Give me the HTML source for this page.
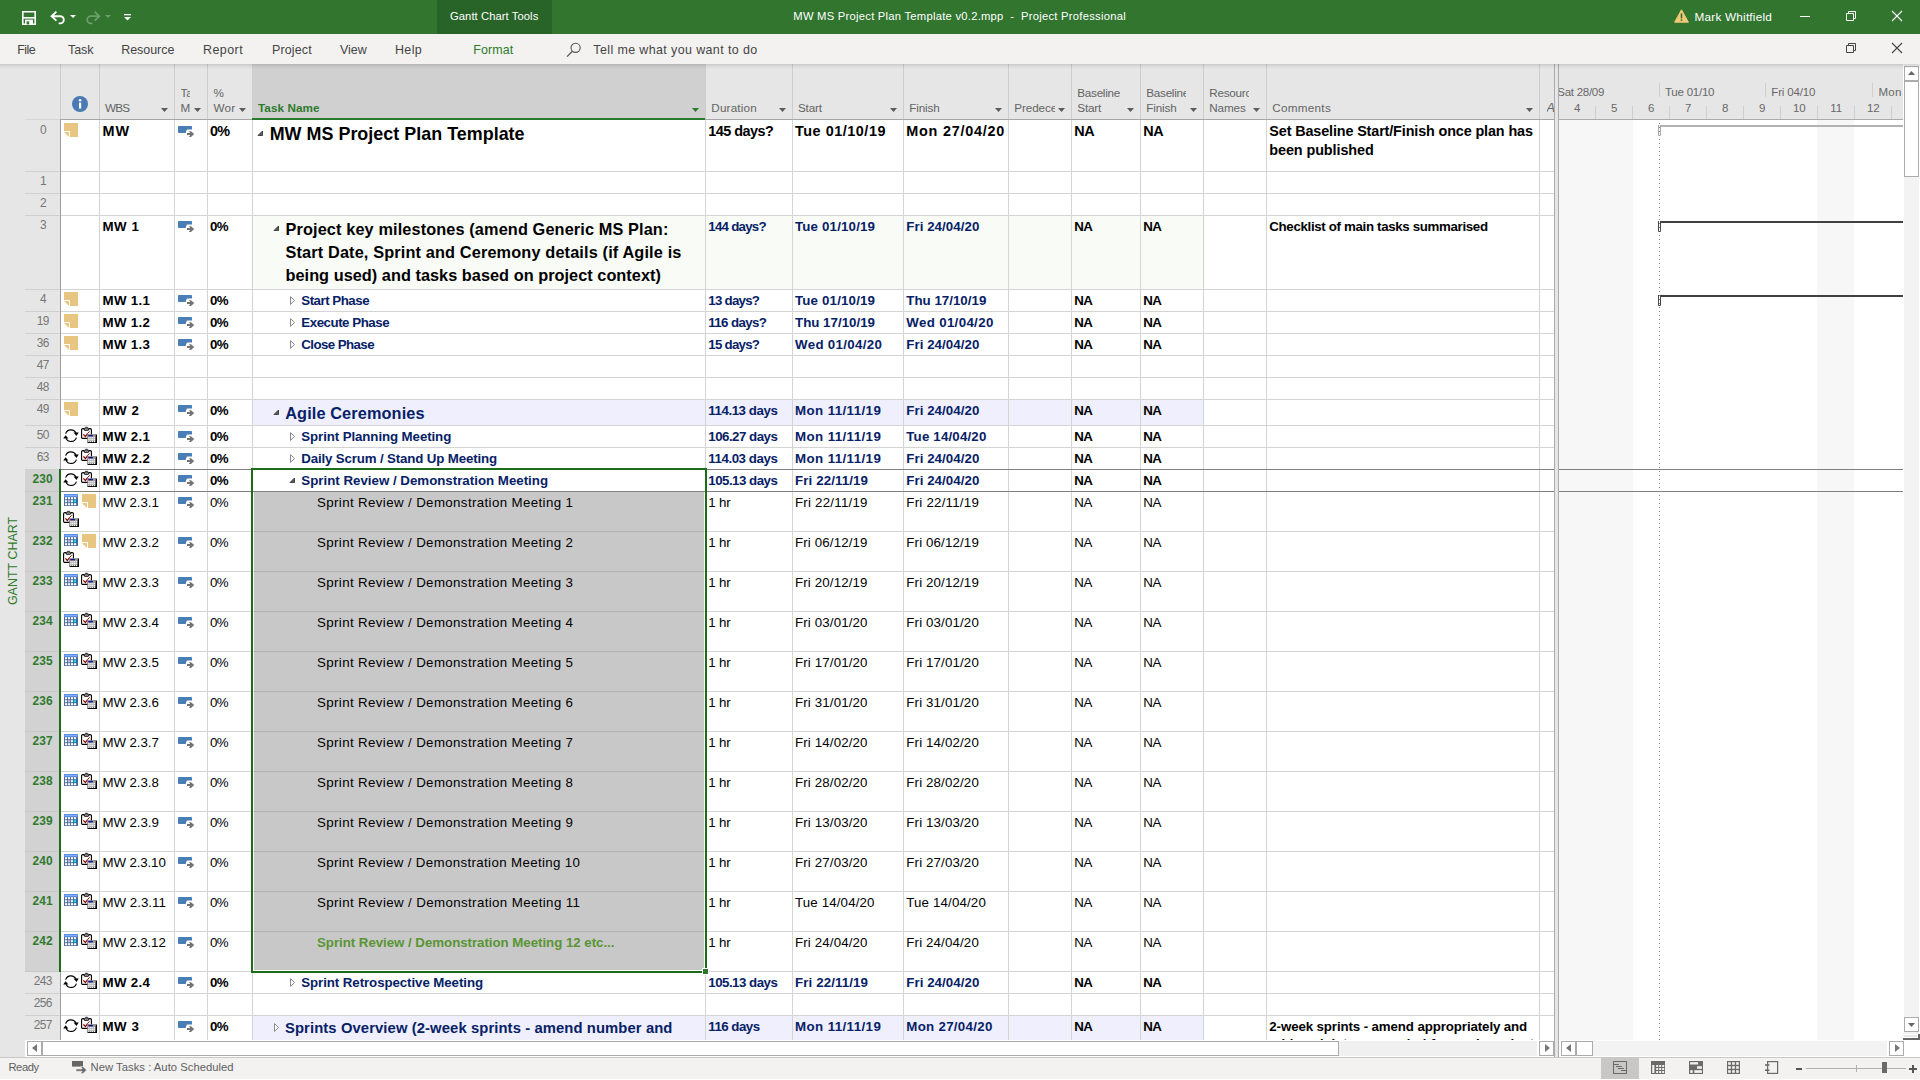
<!DOCTYPE html>
<html lang="en"><head><meta charset="utf-8"><title>MW MS Project Plan Template v0.2.mpp - Project Professional</title><style>
html,body{margin:0;padding:0;}
body{width:1920px;height:1080px;overflow:hidden;position:relative;background:#fff;font-family:"Liberation Sans",sans-serif;}
#app{position:absolute;left:0;top:0;width:1920px;height:1080px;overflow:hidden;}
#app div,#app span.t,#app svg{position:absolute;}
span.t{white-space:pre;display:block;}
svg{overflow:visible;}
</style></head><body><div id="app">
<div style="left:0px;top:0px;width:1920px;height:34px;background:#31752f;"></div>
<div style="left:437px;top:0px;width:115px;height:34px;background:#286328;"></div>
<svg style="left:22px;top:11px" width="14" height="14" viewBox="0 0 14 14"><path d="M.8 .8H13.2V13.2H.8Z" fill="none" stroke="#fff" stroke-width="1.6"/><rect x="1" y="6" width="12" height="1.6" fill="#fff"/><rect x="3" y="8.6" width="8" height="5" fill="#fff"/><rect x="4.6" y="10.4" width="2.6" height="3" fill="#31752f"/></svg>
<svg style="left:50px;top:10px" width="16" height="15" viewBox="0 0 16 15"><path d="M6.4 1.6L1.6 6.2L6.4 10.6" fill="none" stroke="#fff" stroke-width="1.9"/><path d="M2 6.2H10.2A3.6 3.6 0 0 1 10.2 13.4H8.6" fill="none" stroke="#fff" stroke-width="1.9"/></svg>
<svg style="left:70px;top:15px" width="6" height="3" viewBox="0 0 6 3"><path d="M0 0H6L3 3Z" fill="#fff"/></svg>
<svg style="left:85px;top:10px" width="16" height="15" viewBox="0 0 16 15"><path d="M9.6 1.6L14.4 6.2L9.6 10.6" fill="none" stroke="#6f9f6d" stroke-width="1.7"/><path d="M14 6.2H5.8A3.6 3.6 0 0 0 5.8 13.4H7.4" fill="none" stroke="#6f9f6d" stroke-width="1.7"/></svg>
<svg style="left:105px;top:15px" width="6" height="3" viewBox="0 0 6 3"><path d="M0 0H6L3 3Z" fill="#6f9f6d"/></svg>
<svg style="left:124px;top:13.5px" width="7" height="7" viewBox="0 0 7 7"><rect x="0" y="0" width="7" height="1.3" fill="#fff"/><path d="M0 3H7L3.5 6.5Z" fill="#fff"/></svg>
<span class="t" style="left:450.00px;top:4px;font-size:11.22px;color:#fff;line-height:24px;letter-spacing:0.075px;">Gantt Chart Tools</span>
<span class="t" style="left:793.30px;top:4px;font-size:11.22px;color:#fff;line-height:24px;letter-spacing:0.253px;">MW MS Project Plan Template v0.2.mpp  -  Project Professional</span>
<svg style="left:1674px;top:9px" width="15" height="14" viewBox="0 0 15 14"><path d="M7.5 .8L14.4 13.2H.6Z" fill="#f2c879" stroke="#f2c879" stroke-width="1" stroke-linejoin="round"/><rect x="6.7" y="4.4" width="1.6" height="5" fill="#31752f"/><rect x="6.7" y="10.3" width="1.6" height="1.6" fill="#31752f"/></svg>
<span class="t" style="left:1694.50px;top:5px;font-size:11.781px;color:#fff;line-height:24px;letter-spacing:0.213px;">Mark Whitfield</span>
<div style="left:1800px;top:16px;width:10px;height:1px;background:#fff;"></div>
<svg style="left:1846px;top:11px" width="10" height="10" viewBox="0 0 10 10"><path d="M.5 2.5H7.5V9.5H.5Z" fill="none" stroke="#fff" stroke-width="1"/><path d="M2.5 2.5V.5H9.5V7.5H7.5" fill="none" stroke="#fff" stroke-width="1"/></svg>
<svg style="left:1892px;top:11px" width="10" height="10" viewBox="0 0 10 10"><path d="M0 0L10 10M10 0L0 10" stroke="#fff" stroke-width="1.1" fill="none"/></svg>
<div style="left:0px;top:34px;width:1920px;height:30px;background:#f3f2f1;"></div>
<span class="t" style="left:17.30px;top:38px;font-size:12.463550000000001px;color:#444;line-height:24px;letter-spacing:-0.595px;">File</span>
<span class="t" style="left:68.00px;top:38px;font-size:12.463550000000001px;color:#444;line-height:24px;letter-spacing:-0.042px;">Task</span>
<span class="t" style="left:121.20px;top:38px;font-size:12.463550000000001px;color:#444;line-height:24px;letter-spacing:-0.020px;">Resource</span>
<span class="t" style="left:203.00px;top:38px;font-size:12.463550000000001px;color:#444;line-height:24px;letter-spacing:0.458px;">Report</span>
<span class="t" style="left:272.00px;top:38px;font-size:12.463550000000001px;color:#444;line-height:24px;letter-spacing:0.151px;">Project</span>
<span class="t" style="left:340.00px;top:38px;font-size:12.463550000000001px;color:#444;line-height:24px;letter-spacing:-0.030px;">View</span>
<span class="t" style="left:395.00px;top:38px;font-size:12.463550000000001px;color:#444;line-height:24px;letter-spacing:0.355px;">Help</span>
<span class="t" style="left:473.30px;top:38px;font-size:12.463550000000001px;color:#2b7a2b;line-height:24px;letter-spacing:0.105px;">Format</span>
<span class="t" style="left:593.30px;top:38px;font-size:12.463550000000001px;color:#444;line-height:24px;letter-spacing:0.392px;">Tell me what you want to do</span>
<svg style="left:566px;top:42px" width="16" height="16" viewBox="0 0 16 16"><circle cx="9.6" cy="5.8" r="4.6" fill="none" stroke="#555" stroke-width="1.1"/><path d="M6.4 9.2L1 14.6" stroke="#555" stroke-width="1.3" fill="none"/></svg>
<svg style="left:1846px;top:43px" width="10" height="10" viewBox="0 0 10 10"><path d="M.5 2.5H7.5V9.5H.5Z" fill="none" stroke="#444" stroke-width="1"/><path d="M2.5 2.5V.5H9.5V7.5H7.5" fill="none" stroke="#444" stroke-width="1"/></svg>
<svg style="left:1892px;top:43px" width="10" height="10" viewBox="0 0 10 10"><path d="M0 0L10 10M10 0L0 10" stroke="#444" stroke-width="1.1" fill="none"/></svg>
<div style="left:0px;top:64px;width:1920px;height:5px;background:linear-gradient(rgba(0,0,0,.13),rgba(0,0,0,.05) 45%,rgba(0,0,0,0));z-index:5;"></div>
<div style="left:0px;top:64px;width:25px;height:993px;background:#e6e6e6;"></div>
<span class="t" style="left:12.5px;top:561px;font-size:12.46px;color:#2f7a2d;line-height:20px;transform:translate(-50%,-50%) rotate(-90deg);letter-spacing:0.011px;">GANTT CHART</span>
<div style="left:0px;top:1057px;width:1920px;height:23px;background:#f3f2f1;"></div>
<div style="left:0px;top:1057px;width:1920px;height:1px;background:#c8c8c8;"></div>
<div style="left:0px;top:1079px;width:1920px;height:1px;background:#fff;"></div>
<span class="t" style="left:8.50px;top:1055px;font-size:11.22px;color:#5e5e5e;line-height:24px;letter-spacing:-0.483px;">Ready</span>
<svg style="left:72px;top:1061px" width="15" height="13" viewBox="0 0 15 13"><rect x="0" y="0" width="11" height="5.6" fill="#666"/><path d="M4 8H10.2L8.6 5.6H11L14.6 9L11 12.6H8.6L10.2 10.2H4Z" fill="#666" stroke="#f3f2f1" stroke-width=".6"/></svg>
<span class="t" style="left:90.60px;top:1055px;font-size:11.22px;color:#5e5e5e;line-height:24px;letter-spacing:0.040px;">New Tasks : Auto Scheduled</span>
<div style="left:1601px;top:1058px;width:38px;height:21px;background:#c8c7c5;"></div>
<svg style="left:1613px;top:1061px" width="14" height="13" viewBox="0 0 14 13"><rect x=".5" y=".5" width="13" height="12" fill="none" stroke="#6a6a6a" stroke-width="1"/><path d="M0 3.5H5.8M3 5.5H8.8M5 7.5H10.8M8 9.5H14" stroke="#6a6a6a" stroke-width="1"/></svg>
<svg style="left:1651px;top:1061px" width="14" height="13" viewBox="0 0 14 13"><rect x="0" y="0" width="14" height="13" fill="#6a6a6a"/><rect x="1.2" y="4" width="2.2" height="8" fill="#f3f2f1"/><rect x="5.2" y="4.0" width="2" height="2" fill="#f3f2f1"/><rect x="5.2" y="7.0" width="2" height="2" fill="#f3f2f1"/><rect x="5.2" y="10.0" width="2" height="2" fill="#f3f2f1"/><rect x="8.2" y="4.0" width="2" height="2" fill="#f3f2f1"/><rect x="8.2" y="7.0" width="2" height="2" fill="#f3f2f1"/><rect x="8.2" y="10.0" width="2" height="2" fill="#f3f2f1"/><rect x="11.2" y="4.0" width="2" height="2" fill="#f3f2f1"/><rect x="11.2" y="7.0" width="2" height="2" fill="#f3f2f1"/><rect x="11.2" y="10.0" width="2" height="2" fill="#f3f2f1"/></svg>
<svg style="left:1689px;top:1061px" width="14" height="13" viewBox="0 0 14 13"><rect x="0" y="0" width="14" height="13" fill="#6a6a6a"/><rect x="1.1" y="1.2" width="8" height="2.3" fill="#f3f2f1"/><rect x="8.1" y="5.2" width="4.8" height="2.6" fill="#f3f2f1"/><rect x="1.2" y="9.2" width="2.5" height="2.7" fill="#f3f2f1"/><rect x="5.3" y="9.2" width="7.6" height="2.7" fill="#f3f2f1"/></svg>
<svg style="left:1727px;top:1061px" width="13" height="13" viewBox="0 0 13 13"><rect x="0" y="0" width="13" height="13" fill="#6a6a6a"/><rect x="1.1" y="1.2" width="2.7" height="2.6" fill="#f3f2f1"/><rect x="1.1" y="5.2" width="2.7" height="2.6" fill="#f3f2f1"/><rect x="1.1" y="9.2" width="2.7" height="2.6" fill="#f3f2f1"/><rect x="5.1" y="1.2" width="2.7" height="2.6" fill="#f3f2f1"/><rect x="5.1" y="5.2" width="2.7" height="2.6" fill="#f3f2f1"/><rect x="5.1" y="9.2" width="2.7" height="2.6" fill="#f3f2f1"/><rect x="9.1" y="1.2" width="2.7" height="2.6" fill="#f3f2f1"/><rect x="9.1" y="5.2" width="2.7" height="2.6" fill="#f3f2f1"/><rect x="9.1" y="9.2" width="2.7" height="2.6" fill="#f3f2f1"/></svg>
<svg style="left:1765px;top:1061px" width="14" height="13" viewBox="0 0 14 13"><rect x="2.6" y=".6" width="10" height="11.8" fill="none" stroke="#6a6a6a" stroke-width="1.2"/><rect x="0" y="3.2" width="4.4" height="1.6" fill="#6a6a6a"/><rect x="0" y="8.4" width="4.4" height="1.6" fill="#6a6a6a"/></svg>
<div style="left:1796px;top:1067.5px;width:6px;height:2px;background:#555;"></div>
<div style="left:1806px;top:1068px;width:100px;height:1px;background:#b0b0b0;"></div>
<div style="left:1856px;top:1065px;width:1px;height:7px;background:#b0b0b0;"></div>
<div style="left:1882px;top:1062px;width:5px;height:11px;background:#6a6a6a;"></div>
<div style="left:1909px;top:1067.5px;width:8px;height:2px;background:#555;"></div>
<div style="left:1912px;top:1064.5px;width:2px;height:8px;background:#555;"></div>
<div style="left:25px;top:64px;width:1534px;height:55px;background:#e6e6e6;"></div>
<div style="left:252px;top:64px;width:453px;height:55px;background:#d0d0d0;"></div>
<div style="left:60px;top:64px;width:1px;height:55px;background:#cdcdcd;"></div>
<div style="left:99px;top:64px;width:1px;height:55px;background:#cdcdcd;"></div>
<div style="left:174px;top:64px;width:1px;height:55px;background:#cdcdcd;"></div>
<div style="left:207px;top:64px;width:1px;height:55px;background:#cdcdcd;"></div>
<div style="left:252px;top:64px;width:1px;height:55px;background:#cdcdcd;"></div>
<div style="left:705px;top:64px;width:1px;height:55px;background:#cdcdcd;"></div>
<div style="left:792px;top:64px;width:1px;height:55px;background:#cdcdcd;"></div>
<div style="left:903px;top:64px;width:1px;height:55px;background:#cdcdcd;"></div>
<div style="left:1008px;top:64px;width:1px;height:55px;background:#cdcdcd;"></div>
<div style="left:1071px;top:64px;width:1px;height:55px;background:#cdcdcd;"></div>
<div style="left:1140px;top:64px;width:1px;height:55px;background:#cdcdcd;"></div>
<div style="left:1203px;top:64px;width:1px;height:55px;background:#cdcdcd;"></div>
<div style="left:1266px;top:64px;width:1px;height:55px;background:#cdcdcd;"></div>
<div style="left:1539px;top:64px;width:1px;height:55px;background:#cdcdcd;"></div>
<div style="left:60px;top:119px;width:1499px;height:1px;background:#a6a6a6;"></div>
<div style="left:252px;top:118px;width:453px;height:2px;background:#2c7a2c;"></div>
<svg style="left:72px;top:96px" width="16" height="16" viewBox="0 0 16 16"><circle cx="8" cy="8" r="8" fill="#4a7ab4"/><rect x="7" y="6.6" width="2.2" height="6" fill="#fff"/><circle cx="8.1" cy="4.2" r="1.3" fill="#fff"/></svg>
<span class="t" style="left:105.00px;top:96px;font-size:11.7px;color:#646464;line-height:24px;letter-spacing:-0.750px;">WBS</span>
<span class="t" style="left:180.50px;top:81px;font-size:11.7px;color:#646464;line-height:24px;width:9.6px;overflow:hidden;">Ta</span>
<span class="t" style="left:180.50px;top:96px;font-size:11.7px;color:#646464;line-height:24px;">M</span>
<span class="t" style="left:213.60px;top:81px;font-size:11.7px;color:#646464;line-height:24px;">%</span>
<span class="t" style="left:213.60px;top:96px;font-size:11.7px;color:#646464;line-height:24px;letter-spacing:0.132px;">Wor</span>
<span class="t" style="left:258.00px;top:96px;font-size:11.7px;color:#2c7a2c;line-height:24px;font-weight:bold;letter-spacing:0.073px;">Task Name</span>
<span class="t" style="left:711.30px;top:96px;font-size:11.7px;color:#646464;line-height:24px;letter-spacing:0.182px;">Duration</span>
<span class="t" style="left:798.00px;top:96px;font-size:11.7px;color:#646464;line-height:24px;letter-spacing:-0.177px;">Start</span>
<span class="t" style="left:909.30px;top:96px;font-size:11.7px;color:#646464;line-height:24px;letter-spacing:-0.142px;">Finish</span>
<span class="t" style="left:1014.30px;top:96px;font-size:11.7px;color:#646464;line-height:24px;letter-spacing:-0.097px;width:40.5px;overflow:hidden;">Predece</span>
<span class="t" style="left:1077.30px;top:81px;font-size:11.7px;color:#646464;line-height:24px;letter-spacing:-0.269px;">Baseline</span>
<span class="t" style="left:1077.30px;top:96px;font-size:11.7px;color:#646464;line-height:24px;letter-spacing:-0.177px;">Start</span>
<span class="t" style="left:1146.30px;top:81px;font-size:11.7px;color:#646464;line-height:24px;letter-spacing:-0.269px;width:40px;overflow:hidden;">Baseline</span>
<span class="t" style="left:1146.30px;top:96px;font-size:11.7px;color:#646464;line-height:24px;letter-spacing:-0.142px;">Finish</span>
<span class="t" style="left:1209.30px;top:81px;font-size:11.7px;color:#646464;line-height:24px;letter-spacing:-0.261px;width:40px;overflow:hidden;">Resourc</span>
<span class="t" style="left:1209.30px;top:96px;font-size:11.7px;color:#646464;line-height:24px;letter-spacing:-0.140px;">Names</span>
<span class="t" style="left:1272.30px;top:96px;font-size:11.7px;color:#646464;line-height:24px;letter-spacing:0.276px;">Comments</span>
<span class="t" style="left:1546.50px;top:96px;font-size:12.7px;color:#646464;line-height:24px;font-style:italic;width:7.5px;overflow:hidden;">A</span>
<svg style="left:161px;top:108px" width="7" height="4" viewBox="0 0 7 4"><path d="M0 0H7L3.5 4Z" fill="#5c5c5c"/></svg>
<svg style="left:194px;top:108px" width="7" height="4" viewBox="0 0 7 4"><path d="M0 0H7L3.5 4Z" fill="#5c5c5c"/></svg>
<svg style="left:239px;top:108px" width="7" height="4" viewBox="0 0 7 4"><path d="M0 0H7L3.5 4Z" fill="#5c5c5c"/></svg>
<svg style="left:779px;top:108px" width="7" height="4" viewBox="0 0 7 4"><path d="M0 0H7L3.5 4Z" fill="#5c5c5c"/></svg>
<svg style="left:890px;top:108px" width="7" height="4" viewBox="0 0 7 4"><path d="M0 0H7L3.5 4Z" fill="#5c5c5c"/></svg>
<svg style="left:994.5px;top:108px" width="7" height="4" viewBox="0 0 7 4"><path d="M0 0H7L3.5 4Z" fill="#5c5c5c"/></svg>
<svg style="left:1057.5px;top:108px" width="7" height="4" viewBox="0 0 7 4"><path d="M0 0H7L3.5 4Z" fill="#5c5c5c"/></svg>
<svg style="left:1127px;top:108px" width="7" height="4" viewBox="0 0 7 4"><path d="M0 0H7L3.5 4Z" fill="#5c5c5c"/></svg>
<svg style="left:1190px;top:108px" width="7" height="4" viewBox="0 0 7 4"><path d="M0 0H7L3.5 4Z" fill="#5c5c5c"/></svg>
<svg style="left:1253px;top:108px" width="7" height="4" viewBox="0 0 7 4"><path d="M0 0H7L3.5 4Z" fill="#5c5c5c"/></svg>
<svg style="left:1526px;top:108px" width="7" height="4" viewBox="0 0 7 4"><path d="M0 0H7L3.5 4Z" fill="#5c5c5c"/></svg>
<svg style="left:692px;top:108px" width="7" height="4" viewBox="0 0 7 4"><path d="M0 0H7L3.5 4Z" fill="#2c7a2c"/></svg>
<div style="left:25px;top:119px;width:35px;height:921px;background:#e6e6e6;"></div>
<div style="left:25px;top:119px;width:35px;height:1px;background:#d6d6d6;"></div>
<div style="left:25px;top:469px;width:35px;height:502px;background:#d2d2d2;"></div>
<div style="left:253px;top:216px;width:950px;height:73px;background:#f9fbf6;"></div>
<div style="left:253px;top:400px;width:950px;height:25px;background:#efeffe;"></div>
<div style="left:253px;top:1016px;width:950px;height:24px;background:#efeffe;"></div>
<div style="left:60px;top:171px;width:1494px;height:1px;background:#d4d4d4;"></div>
<div style="left:25px;top:171px;width:35px;height:1px;background:#d0d0d0;"></div>
<div style="left:60px;top:193px;width:1494px;height:1px;background:#d4d4d4;"></div>
<div style="left:25px;top:193px;width:35px;height:1px;background:#d0d0d0;"></div>
<div style="left:60px;top:215px;width:1494px;height:1px;background:#d4d4d4;"></div>
<div style="left:25px;top:215px;width:35px;height:1px;background:#d0d0d0;"></div>
<div style="left:60px;top:289px;width:1494px;height:1px;background:#d4d4d4;"></div>
<div style="left:25px;top:289px;width:35px;height:1px;background:#d0d0d0;"></div>
<div style="left:60px;top:311px;width:1494px;height:1px;background:#d4d4d4;"></div>
<div style="left:25px;top:311px;width:35px;height:1px;background:#d0d0d0;"></div>
<div style="left:60px;top:333px;width:1494px;height:1px;background:#d4d4d4;"></div>
<div style="left:25px;top:333px;width:35px;height:1px;background:#d0d0d0;"></div>
<div style="left:60px;top:355px;width:1494px;height:1px;background:#d4d4d4;"></div>
<div style="left:25px;top:355px;width:35px;height:1px;background:#d0d0d0;"></div>
<div style="left:60px;top:377px;width:1494px;height:1px;background:#d4d4d4;"></div>
<div style="left:25px;top:377px;width:35px;height:1px;background:#d0d0d0;"></div>
<div style="left:60px;top:399px;width:1494px;height:1px;background:#d4d4d4;"></div>
<div style="left:25px;top:399px;width:35px;height:1px;background:#d0d0d0;"></div>
<div style="left:60px;top:425px;width:1494px;height:1px;background:#d4d4d4;"></div>
<div style="left:25px;top:425px;width:35px;height:1px;background:#d0d0d0;"></div>
<div style="left:60px;top:447px;width:1494px;height:1px;background:#d4d4d4;"></div>
<div style="left:25px;top:447px;width:35px;height:1px;background:#d0d0d0;"></div>
<div style="left:60px;top:469px;width:1494px;height:1px;background:#d4d4d4;"></div>
<div style="left:25px;top:469px;width:35px;height:1px;background:#d0d0d0;"></div>
<div style="left:60px;top:491px;width:1494px;height:1px;background:#d4d4d4;"></div>
<div style="left:25px;top:491px;width:35px;height:1px;background:#c8c8c8;"></div>
<div style="left:60px;top:531px;width:1494px;height:1px;background:#d4d4d4;"></div>
<div style="left:25px;top:531px;width:35px;height:1px;background:#c8c8c8;"></div>
<div style="left:60px;top:571px;width:1494px;height:1px;background:#d4d4d4;"></div>
<div style="left:25px;top:571px;width:35px;height:1px;background:#c8c8c8;"></div>
<div style="left:60px;top:611px;width:1494px;height:1px;background:#d4d4d4;"></div>
<div style="left:25px;top:611px;width:35px;height:1px;background:#c8c8c8;"></div>
<div style="left:60px;top:651px;width:1494px;height:1px;background:#d4d4d4;"></div>
<div style="left:25px;top:651px;width:35px;height:1px;background:#c8c8c8;"></div>
<div style="left:60px;top:691px;width:1494px;height:1px;background:#d4d4d4;"></div>
<div style="left:25px;top:691px;width:35px;height:1px;background:#c8c8c8;"></div>
<div style="left:60px;top:731px;width:1494px;height:1px;background:#d4d4d4;"></div>
<div style="left:25px;top:731px;width:35px;height:1px;background:#c8c8c8;"></div>
<div style="left:60px;top:771px;width:1494px;height:1px;background:#d4d4d4;"></div>
<div style="left:25px;top:771px;width:35px;height:1px;background:#c8c8c8;"></div>
<div style="left:60px;top:811px;width:1494px;height:1px;background:#d4d4d4;"></div>
<div style="left:25px;top:811px;width:35px;height:1px;background:#c8c8c8;"></div>
<div style="left:60px;top:851px;width:1494px;height:1px;background:#d4d4d4;"></div>
<div style="left:25px;top:851px;width:35px;height:1px;background:#c8c8c8;"></div>
<div style="left:60px;top:891px;width:1494px;height:1px;background:#d4d4d4;"></div>
<div style="left:25px;top:891px;width:35px;height:1px;background:#c8c8c8;"></div>
<div style="left:60px;top:931px;width:1494px;height:1px;background:#d4d4d4;"></div>
<div style="left:25px;top:931px;width:35px;height:1px;background:#c8c8c8;"></div>
<div style="left:60px;top:971px;width:1494px;height:1px;background:#d4d4d4;"></div>
<div style="left:25px;top:971px;width:35px;height:1px;background:#c8c8c8;"></div>
<div style="left:60px;top:993px;width:1494px;height:1px;background:#d4d4d4;"></div>
<div style="left:25px;top:993px;width:35px;height:1px;background:#d0d0d0;"></div>
<div style="left:60px;top:1015px;width:1494px;height:1px;background:#d4d4d4;"></div>
<div style="left:25px;top:1015px;width:35px;height:1px;background:#d0d0d0;"></div>
<div style="left:99px;top:120px;width:1px;height:920px;background:#d4d4d4;"></div>
<div style="left:174px;top:120px;width:1px;height:920px;background:#d4d4d4;"></div>
<div style="left:207px;top:120px;width:1px;height:920px;background:#d4d4d4;"></div>
<div style="left:252px;top:120px;width:1px;height:920px;background:#d4d4d4;"></div>
<div style="left:705px;top:120px;width:1px;height:920px;background:#d4d4d4;"></div>
<div style="left:792px;top:120px;width:1px;height:920px;background:#d4d4d4;"></div>
<div style="left:903px;top:120px;width:1px;height:920px;background:#d4d4d4;"></div>
<div style="left:1008px;top:120px;width:1px;height:920px;background:#d4d4d4;"></div>
<div style="left:1071px;top:120px;width:1px;height:920px;background:#d4d4d4;"></div>
<div style="left:1140px;top:120px;width:1px;height:920px;background:#d4d4d4;"></div>
<div style="left:1203px;top:120px;width:1px;height:920px;background:#d4d4d4;"></div>
<div style="left:1266px;top:120px;width:1px;height:920px;background:#d4d4d4;"></div>
<div style="left:1539px;top:120px;width:1px;height:920px;background:#d4d4d4;"></div>
<div style="left:60px;top:120px;width:1px;height:920px;background:#9c9c9c;"></div>
<div style="left:60px;top:469px;width:1494px;height:1px;background:#808080;"></div>
<div style="left:60px;top:491px;width:1494px;height:1px;background:#808080;"></div>
<div style="left:254px;top:492px;width:450px;height:478px;background:#c8c8c8;"></div>
<div style="left:254px;top:531px;width:450px;height:1px;background:#b2b2b2;"></div>
<div style="left:254px;top:571px;width:450px;height:1px;background:#b2b2b2;"></div>
<div style="left:254px;top:611px;width:450px;height:1px;background:#b2b2b2;"></div>
<div style="left:254px;top:651px;width:450px;height:1px;background:#b2b2b2;"></div>
<div style="left:254px;top:691px;width:450px;height:1px;background:#b2b2b2;"></div>
<div style="left:254px;top:731px;width:450px;height:1px;background:#b2b2b2;"></div>
<div style="left:254px;top:771px;width:450px;height:1px;background:#b2b2b2;"></div>
<div style="left:254px;top:811px;width:450px;height:1px;background:#b2b2b2;"></div>
<div style="left:254px;top:851px;width:450px;height:1px;background:#b2b2b2;"></div>
<div style="left:254px;top:891px;width:450px;height:1px;background:#b2b2b2;"></div>
<div style="left:254px;top:931px;width:450px;height:1px;background:#b2b2b2;"></div>
<div style="left:251px;top:468px;width:456px;height:2px;background:#1b6c1b;"></div>
<div style="left:251px;top:971px;width:456px;height:2px;background:#1b6c1b;"></div>
<div style="left:251px;top:468px;width:2px;height:505px;background:#1b6c1b;"></div>
<div style="left:705px;top:468px;width:2px;height:505px;background:#1b6c1b;"></div>
<div style="left:702px;top:968px;width:7px;height:7px;background:#fff;"></div>
<div style="left:703px;top:969px;width:5px;height:5px;background:#2f752d;"></div>
<div style="left:59px;top:469px;width:2px;height:503px;background:#1b6c1b;"></div>
<span class="t" style="left:39.89px;top:118px;font-size:11.9px;color:#767676;line-height:24px;letter-spacing:-0.397px;">0</span>
<span class="t" style="left:39.89px;top:169px;font-size:11.9px;color:#767676;line-height:24px;letter-spacing:-0.397px;">1</span>
<span class="t" style="left:39.89px;top:191px;font-size:11.9px;color:#767676;line-height:24px;letter-spacing:-0.397px;">2</span>
<span class="t" style="left:39.89px;top:213px;font-size:11.9px;color:#767676;line-height:24px;letter-spacing:-0.397px;">3</span>
<span class="t" style="left:39.89px;top:287px;font-size:11.9px;color:#767676;line-height:24px;letter-spacing:-0.397px;">4</span>
<span class="t" style="left:36.78px;top:309px;font-size:11.9px;color:#767676;line-height:24px;letter-spacing:-0.750px;">19</span>
<span class="t" style="left:36.78px;top:331px;font-size:11.9px;color:#767676;line-height:24px;letter-spacing:-0.750px;">36</span>
<span class="t" style="left:36.78px;top:353px;font-size:11.9px;color:#767676;line-height:24px;letter-spacing:-0.750px;">47</span>
<span class="t" style="left:36.78px;top:375px;font-size:11.9px;color:#767676;line-height:24px;letter-spacing:-0.750px;">48</span>
<span class="t" style="left:36.78px;top:397px;font-size:11.9px;color:#767676;line-height:24px;letter-spacing:-0.750px;">49</span>
<span class="t" style="left:36.78px;top:423px;font-size:11.9px;color:#767676;line-height:24px;letter-spacing:-0.750px;">50</span>
<span class="t" style="left:36.78px;top:445px;font-size:11.9px;color:#767676;line-height:24px;letter-spacing:-0.750px;">63</span>
<span class="t" style="left:32.45px;top:467px;font-size:11.9px;color:#2f7a2d;line-height:24px;font-weight:bold;letter-spacing:0.222px;">230</span>
<span class="t" style="left:32.45px;top:489px;font-size:11.9px;color:#2f7a2d;line-height:24px;font-weight:bold;letter-spacing:0.222px;">231</span>
<span class="t" style="left:32.45px;top:529px;font-size:11.9px;color:#2f7a2d;line-height:24px;font-weight:bold;letter-spacing:0.222px;">232</span>
<span class="t" style="left:32.45px;top:569px;font-size:11.9px;color:#2f7a2d;line-height:24px;font-weight:bold;letter-spacing:0.222px;">233</span>
<span class="t" style="left:32.45px;top:609px;font-size:11.9px;color:#2f7a2d;line-height:24px;font-weight:bold;letter-spacing:0.222px;">234</span>
<span class="t" style="left:32.45px;top:649px;font-size:11.9px;color:#2f7a2d;line-height:24px;font-weight:bold;letter-spacing:0.222px;">235</span>
<span class="t" style="left:32.45px;top:689px;font-size:11.9px;color:#2f7a2d;line-height:24px;font-weight:bold;letter-spacing:0.222px;">236</span>
<span class="t" style="left:32.45px;top:729px;font-size:11.9px;color:#2f7a2d;line-height:24px;font-weight:bold;letter-spacing:0.222px;">237</span>
<span class="t" style="left:32.45px;top:769px;font-size:11.9px;color:#2f7a2d;line-height:24px;font-weight:bold;letter-spacing:0.222px;">238</span>
<span class="t" style="left:32.45px;top:809px;font-size:11.9px;color:#2f7a2d;line-height:24px;font-weight:bold;letter-spacing:0.222px;">239</span>
<span class="t" style="left:32.45px;top:849px;font-size:11.9px;color:#2f7a2d;line-height:24px;font-weight:bold;letter-spacing:0.222px;">240</span>
<span class="t" style="left:32.45px;top:889px;font-size:11.9px;color:#2f7a2d;line-height:24px;font-weight:bold;letter-spacing:0.222px;">241</span>
<span class="t" style="left:32.45px;top:929px;font-size:11.9px;color:#2f7a2d;line-height:24px;font-weight:bold;letter-spacing:0.222px;">242</span>
<span class="t" style="left:33.67px;top:969px;font-size:11.9px;color:#767676;line-height:24px;letter-spacing:-0.596px;">243</span>
<span class="t" style="left:33.67px;top:991px;font-size:11.9px;color:#767676;line-height:24px;letter-spacing:-0.596px;">256</span>
<span class="t" style="left:33.67px;top:1013px;font-size:11.9px;color:#767676;line-height:24px;letter-spacing:-0.596px;">257</span>
<svg style="left:64px;top:123px" width="14" height="14" viewBox="0 0 14 14"><path d="M0 0H14V14H6V8H0Z" fill="#e8c580"/><path d="M0 9H5V14Z" fill="#e8c580"/></svg>
<span class="t" style="left:102.50px;top:119px;font-size:14.4px;color:#000;line-height:24px;font-weight:bold;letter-spacing:0.900px;">MW</span>
<svg style="left:178px;top:126px" width="17" height="11" viewBox="0 0 17 11"><path d="M0.8 0H13.2Q14 0 14 .8V3.6H9.2L8 5.2V6.2Q8 7 7.2 7H0.8Q0 7 0 6.2V.8Q0 0 .8 0Z" fill="#4a7eb6"/><path d="M9 7.1H12.2L10.9 5.2H13L16.2 8.1L13 11H10.9L12.2 9.1H9Z" fill="#737373"/></svg>
<span class="t" style="left:210.00px;top:119px;font-size:14.4px;color:#000;line-height:24px;font-weight:bold;letter-spacing:-0.750px;">0%</span>
<span class="t" style="left:708.30px;top:119px;font-size:14.4px;color:#000;line-height:24px;font-weight:bold;letter-spacing:-0.518px;">145 days?</span>
<span class="t" style="left:795.00px;top:119px;font-size:14.4px;color:#000;line-height:24px;font-weight:bold;letter-spacing:0.537px;">Tue 01/10/19</span>
<span class="t" style="left:906.30px;top:119px;font-size:14.4px;color:#000;line-height:24px;font-weight:bold;letter-spacing:0.760px;">Mon 27/04/20</span>
<span class="t" style="left:1074.30px;top:119px;font-size:14.4px;color:#000;line-height:24px;font-weight:bold;letter-spacing:-0.499px;">NA</span>
<span class="t" style="left:1143.30px;top:119px;font-size:14.4px;color:#000;line-height:24px;font-weight:bold;letter-spacing:-0.499px;">NA</span>
<span class="t" style="left:102.50px;top:215px;font-size:13.3px;color:#000;line-height:24px;font-weight:bold;letter-spacing:0.525px;">MW 1</span>
<svg style="left:178px;top:221px" width="17" height="11" viewBox="0 0 17 11"><path d="M0.8 0H13.2Q14 0 14 .8V3.6H9.2L8 5.2V6.2Q8 7 7.2 7H0.8Q0 7 0 6.2V.8Q0 0 .8 0Z" fill="#4a7eb6"/><path d="M9 7.1H12.2L10.9 5.2H13L16.2 8.1L13 11H10.9L12.2 9.1H9Z" fill="#737373"/></svg>
<span class="t" style="left:210.00px;top:215px;font-size:13.3px;color:#000;line-height:24px;font-weight:bold;letter-spacing:-0.750px;">0%</span>
<span class="t" style="left:708.30px;top:215px;font-size:13.3px;color:#062166;line-height:24px;font-weight:bold;letter-spacing:-0.750px;">144 days?</span>
<span class="t" style="left:795.00px;top:215px;font-size:13.3px;color:#062166;line-height:24px;font-weight:bold;letter-spacing:0.170px;">Tue 01/10/19</span>
<span class="t" style="left:906.30px;top:215px;font-size:13.3px;color:#062166;line-height:24px;font-weight:bold;letter-spacing:0.049px;">Fri 24/04/20</span>
<span class="t" style="left:1074.30px;top:215px;font-size:13.3px;color:#000;line-height:24px;font-weight:bold;letter-spacing:-0.710px;">NA</span>
<span class="t" style="left:1143.30px;top:215px;font-size:13.3px;color:#000;line-height:24px;font-weight:bold;letter-spacing:-0.710px;">NA</span>
<svg style="left:64px;top:292px" width="14" height="14" viewBox="0 0 14 14"><path d="M0 0H14V14H6V8H0Z" fill="#e8c580"/><path d="M0 9H5V14Z" fill="#e8c580"/></svg>
<span class="t" style="left:102.50px;top:289px;font-size:13.3px;color:#000;line-height:24px;font-weight:bold;letter-spacing:0.337px;">MW 1.1</span>
<svg style="left:178px;top:295px" width="17" height="11" viewBox="0 0 17 11"><path d="M0.8 0H13.2Q14 0 14 .8V3.6H9.2L8 5.2V6.2Q8 7 7.2 7H0.8Q0 7 0 6.2V.8Q0 0 .8 0Z" fill="#4a7eb6"/><path d="M9 7.1H12.2L10.9 5.2H13L16.2 8.1L13 11H10.9L12.2 9.1H9Z" fill="#737373"/></svg>
<span class="t" style="left:210.00px;top:289px;font-size:13.3px;color:#000;line-height:24px;font-weight:bold;letter-spacing:-0.750px;">0%</span>
<span class="t" style="left:708.30px;top:289px;font-size:13.3px;color:#062166;line-height:24px;font-weight:bold;letter-spacing:-0.750px;">13 days?</span>
<span class="t" style="left:795.00px;top:289px;font-size:13.3px;color:#062166;line-height:24px;font-weight:bold;letter-spacing:0.170px;">Tue 01/10/19</span>
<span class="t" style="left:906.30px;top:289px;font-size:13.3px;color:#062166;line-height:24px;font-weight:bold;letter-spacing:0.014px;">Thu 17/10/19</span>
<span class="t" style="left:1074.30px;top:289px;font-size:13.3px;color:#000;line-height:24px;font-weight:bold;letter-spacing:-0.710px;">NA</span>
<span class="t" style="left:1143.30px;top:289px;font-size:13.3px;color:#000;line-height:24px;font-weight:bold;letter-spacing:-0.710px;">NA</span>
<span class="t" style="left:301.30px;top:289px;font-size:13.3px;color:#062166;line-height:24px;font-weight:bold;letter-spacing:-0.489px;">Start Phase</span>
<svg style="left:290px;top:296px" width="5" height="9" viewBox="0 0 5 9"><path d="M0.5 0.6L4.5 4.5L0.5 8.4Z" fill="#fff" stroke="#8a8a8a" stroke-width="1"/></svg>
<svg style="left:64px;top:314px" width="14" height="14" viewBox="0 0 14 14"><path d="M0 0H14V14H6V8H0Z" fill="#e8c580"/><path d="M0 9H5V14Z" fill="#e8c580"/></svg>
<span class="t" style="left:102.50px;top:311px;font-size:13.3px;color:#000;line-height:24px;font-weight:bold;letter-spacing:0.337px;">MW 1.2</span>
<svg style="left:178px;top:317px" width="17" height="11" viewBox="0 0 17 11"><path d="M0.8 0H13.2Q14 0 14 .8V3.6H9.2L8 5.2V6.2Q8 7 7.2 7H0.8Q0 7 0 6.2V.8Q0 0 .8 0Z" fill="#4a7eb6"/><path d="M9 7.1H12.2L10.9 5.2H13L16.2 8.1L13 11H10.9L12.2 9.1H9Z" fill="#737373"/></svg>
<span class="t" style="left:210.00px;top:311px;font-size:13.3px;color:#000;line-height:24px;font-weight:bold;letter-spacing:-0.750px;">0%</span>
<span class="t" style="left:708.30px;top:311px;font-size:13.3px;color:#062166;line-height:24px;font-weight:bold;letter-spacing:-0.637px;">116 days?</span>
<span class="t" style="left:795.00px;top:311px;font-size:13.3px;color:#062166;line-height:24px;font-weight:bold;letter-spacing:0.014px;">Thu 17/10/19</span>
<span class="t" style="left:906.30px;top:311px;font-size:13.3px;color:#062166;line-height:24px;font-weight:bold;letter-spacing:0.336px;">Wed 01/04/20</span>
<span class="t" style="left:1074.30px;top:311px;font-size:13.3px;color:#000;line-height:24px;font-weight:bold;letter-spacing:-0.710px;">NA</span>
<span class="t" style="left:1143.30px;top:311px;font-size:13.3px;color:#000;line-height:24px;font-weight:bold;letter-spacing:-0.710px;">NA</span>
<span class="t" style="left:301.30px;top:311px;font-size:13.3px;color:#062166;line-height:24px;font-weight:bold;letter-spacing:-0.466px;">Execute Phase</span>
<svg style="left:290px;top:318px" width="5" height="9" viewBox="0 0 5 9"><path d="M0.5 0.6L4.5 4.5L0.5 8.4Z" fill="#fff" stroke="#8a8a8a" stroke-width="1"/></svg>
<svg style="left:64px;top:336px" width="14" height="14" viewBox="0 0 14 14"><path d="M0 0H14V14H6V8H0Z" fill="#e8c580"/><path d="M0 9H5V14Z" fill="#e8c580"/></svg>
<span class="t" style="left:102.50px;top:333px;font-size:13.3px;color:#000;line-height:24px;font-weight:bold;letter-spacing:0.337px;">MW 1.3</span>
<svg style="left:178px;top:339px" width="17" height="11" viewBox="0 0 17 11"><path d="M0.8 0H13.2Q14 0 14 .8V3.6H9.2L8 5.2V6.2Q8 7 7.2 7H0.8Q0 7 0 6.2V.8Q0 0 .8 0Z" fill="#4a7eb6"/><path d="M9 7.1H12.2L10.9 5.2H13L16.2 8.1L13 11H10.9L12.2 9.1H9Z" fill="#737373"/></svg>
<span class="t" style="left:210.00px;top:333px;font-size:13.3px;color:#000;line-height:24px;font-weight:bold;letter-spacing:-0.750px;">0%</span>
<span class="t" style="left:708.30px;top:333px;font-size:13.3px;color:#062166;line-height:24px;font-weight:bold;letter-spacing:-0.750px;">15 days?</span>
<span class="t" style="left:795.00px;top:333px;font-size:13.3px;color:#062166;line-height:24px;font-weight:bold;letter-spacing:0.336px;">Wed 01/04/20</span>
<span class="t" style="left:906.30px;top:333px;font-size:13.3px;color:#062166;line-height:24px;font-weight:bold;letter-spacing:0.049px;">Fri 24/04/20</span>
<span class="t" style="left:1074.30px;top:333px;font-size:13.3px;color:#000;line-height:24px;font-weight:bold;letter-spacing:-0.710px;">NA</span>
<span class="t" style="left:1143.30px;top:333px;font-size:13.3px;color:#000;line-height:24px;font-weight:bold;letter-spacing:-0.710px;">NA</span>
<span class="t" style="left:301.30px;top:333px;font-size:13.3px;color:#062166;line-height:24px;font-weight:bold;letter-spacing:-0.580px;">Close Phase</span>
<svg style="left:290px;top:340px" width="5" height="9" viewBox="0 0 5 9"><path d="M0.5 0.6L4.5 4.5L0.5 8.4Z" fill="#fff" stroke="#8a8a8a" stroke-width="1"/></svg>
<svg style="left:64px;top:402px" width="14" height="14" viewBox="0 0 14 14"><path d="M0 0H14V14H6V8H0Z" fill="#e8c580"/><path d="M0 9H5V14Z" fill="#e8c580"/></svg>
<span class="t" style="left:102.50px;top:399px;font-size:13.3px;color:#000;line-height:24px;font-weight:bold;letter-spacing:0.525px;">MW 2</span>
<svg style="left:178px;top:405px" width="17" height="11" viewBox="0 0 17 11"><path d="M0.8 0H13.2Q14 0 14 .8V3.6H9.2L8 5.2V6.2Q8 7 7.2 7H0.8Q0 7 0 6.2V.8Q0 0 .8 0Z" fill="#4a7eb6"/><path d="M9 7.1H12.2L10.9 5.2H13L16.2 8.1L13 11H10.9L12.2 9.1H9Z" fill="#737373"/></svg>
<span class="t" style="left:210.00px;top:399px;font-size:13.3px;color:#000;line-height:24px;font-weight:bold;letter-spacing:-0.750px;">0%</span>
<span class="t" style="left:708.30px;top:399px;font-size:13.3px;color:#062166;line-height:24px;font-weight:bold;letter-spacing:-0.446px;">114.13 days</span>
<span class="t" style="left:795.00px;top:399px;font-size:13.3px;color:#062166;line-height:24px;font-weight:bold;letter-spacing:0.407px;">Mon 11/11/19</span>
<span class="t" style="left:906.30px;top:399px;font-size:13.3px;color:#062166;line-height:24px;font-weight:bold;letter-spacing:0.049px;">Fri 24/04/20</span>
<span class="t" style="left:1074.30px;top:399px;font-size:13.3px;color:#000;line-height:24px;font-weight:bold;letter-spacing:-0.710px;">NA</span>
<span class="t" style="left:1143.30px;top:399px;font-size:13.3px;color:#000;line-height:24px;font-weight:bold;letter-spacing:-0.710px;">NA</span>
<svg style="left:63px;top:429px" width="16" height="14" viewBox="0 0 16 14"><g fill="none" stroke="#000" stroke-width="1.15"><path d="M2.6 4.6A5.6 5.6 0 0 1 13 4.2"/><path d="M13.4 8.6A5.6 5.6 0 0 1 3 9.2"/></g><path d="M10.6 3.6H15.8L13.4 6.9Z" fill="#000"/><path d="M0.2 9.6H5.4L2.6 6.3Z" fill="#000"/></svg>
<svg style="left:81px;top:427px" width="16" height="16" viewBox="0 0 16 16"><rect x="0.6" y="1.6" width="9.8" height="9.8" rx="1.2" fill="#fff" stroke="#000" stroke-width="1.1"/><path d="M3 1.6Q3 3.2 4 3.2H7Q8 3.2 8 1.6" fill="#fff" stroke="#000" stroke-width="1.1"/><rect x="4.1" y="0.3" width="2.8" height="1.6" rx=".6" fill="#fff" stroke="#000" stroke-width=".9"/><path d="M2.4 7.4L4.4 9.6L6.2 7.2" fill="none" stroke="#8b0000" stroke-width="1.3"/><path d="M6.2 7.2L8.6 4.2" fill="none" stroke="#8b0000" stroke-width="1.1" stroke-dasharray="1 .7"/><rect x="6.5" y="7.5" width="9.5" height="8.5" fill="#000"/><rect x="6.5" y="7.5" width="8" height="7" fill="#b4b4b4"/><rect x="6.5" y="7.5" width="8" height="2.2" fill="#9a9a9a"/><rect x="7.3" y="8.1" width="4.6" height="1.2" fill="#000088"/><rect x="7.3" y="10.2" width="1.1" height="1.1" fill="#fff"/><rect x="7.3" y="12.1" width="1.1" height="1.1" fill="#fff"/><rect x="7.3" y="14.0" width="1.1" height="1.1" fill="#fff"/><rect x="9.2" y="10.2" width="1.1" height="1.1" fill="#fff"/><rect x="9.2" y="12.1" width="1.1" height="1.1" fill="#fff"/><rect x="9.2" y="14.0" width="1.1" height="1.1" fill="#fff"/><rect x="11.1" y="10.2" width="1.1" height="1.1" fill="#fff"/><rect x="11.1" y="12.1" width="1.1" height="1.1" fill="#fff"/><rect x="11.1" y="14.0" width="1.1" height="1.1" fill="#fff"/><rect x="13.0" y="10.2" width="1.1" height="1.1" fill="#fff"/><rect x="13.0" y="12.1" width="1.1" height="1.1" fill="#fff"/><rect x="13.0" y="14.0" width="1.1" height="1.1" fill="#fff"/></svg>
<span class="t" style="left:102.50px;top:425px;font-size:13.3px;color:#000;line-height:24px;font-weight:bold;letter-spacing:0.337px;">MW 2.1</span>
<svg style="left:178px;top:431px" width="17" height="11" viewBox="0 0 17 11"><path d="M0.8 0H13.2Q14 0 14 .8V3.6H9.2L8 5.2V6.2Q8 7 7.2 7H0.8Q0 7 0 6.2V.8Q0 0 .8 0Z" fill="#4a7eb6"/><path d="M9 7.1H12.2L10.9 5.2H13L16.2 8.1L13 11H10.9L12.2 9.1H9Z" fill="#737373"/></svg>
<span class="t" style="left:210.00px;top:425px;font-size:13.3px;color:#000;line-height:24px;font-weight:bold;letter-spacing:-0.750px;">0%</span>
<span class="t" style="left:708.30px;top:425px;font-size:13.3px;color:#062166;line-height:24px;font-weight:bold;letter-spacing:-0.519px;">106.27 days</span>
<span class="t" style="left:795.00px;top:425px;font-size:13.3px;color:#062166;line-height:24px;font-weight:bold;letter-spacing:0.407px;">Mon 11/11/19</span>
<span class="t" style="left:906.30px;top:425px;font-size:13.3px;color:#062166;line-height:24px;font-weight:bold;letter-spacing:0.170px;">Tue 14/04/20</span>
<span class="t" style="left:1074.30px;top:425px;font-size:13.3px;color:#000;line-height:24px;font-weight:bold;letter-spacing:-0.710px;">NA</span>
<span class="t" style="left:1143.30px;top:425px;font-size:13.3px;color:#000;line-height:24px;font-weight:bold;letter-spacing:-0.710px;">NA</span>
<span class="t" style="left:301.30px;top:425px;font-size:13.3px;color:#062166;line-height:24px;font-weight:bold;letter-spacing:-0.101px;">Sprint Planning Meeting</span>
<svg style="left:290px;top:432px" width="5" height="9" viewBox="0 0 5 9"><path d="M0.5 0.6L4.5 4.5L0.5 8.4Z" fill="#fff" stroke="#8a8a8a" stroke-width="1"/></svg>
<svg style="left:63px;top:451px" width="16" height="14" viewBox="0 0 16 14"><g fill="none" stroke="#000" stroke-width="1.15"><path d="M2.6 4.6A5.6 5.6 0 0 1 13 4.2"/><path d="M13.4 8.6A5.6 5.6 0 0 1 3 9.2"/></g><path d="M10.6 3.6H15.8L13.4 6.9Z" fill="#000"/><path d="M0.2 9.6H5.4L2.6 6.3Z" fill="#000"/></svg>
<svg style="left:81px;top:449px" width="16" height="16" viewBox="0 0 16 16"><rect x="0.6" y="1.6" width="9.8" height="9.8" rx="1.2" fill="#fff" stroke="#000" stroke-width="1.1"/><path d="M3 1.6Q3 3.2 4 3.2H7Q8 3.2 8 1.6" fill="#fff" stroke="#000" stroke-width="1.1"/><rect x="4.1" y="0.3" width="2.8" height="1.6" rx=".6" fill="#fff" stroke="#000" stroke-width=".9"/><path d="M2.4 7.4L4.4 9.6L6.2 7.2" fill="none" stroke="#8b0000" stroke-width="1.3"/><path d="M6.2 7.2L8.6 4.2" fill="none" stroke="#8b0000" stroke-width="1.1" stroke-dasharray="1 .7"/><rect x="6.5" y="7.5" width="9.5" height="8.5" fill="#000"/><rect x="6.5" y="7.5" width="8" height="7" fill="#b4b4b4"/><rect x="6.5" y="7.5" width="8" height="2.2" fill="#9a9a9a"/><rect x="7.3" y="8.1" width="4.6" height="1.2" fill="#000088"/><rect x="7.3" y="10.2" width="1.1" height="1.1" fill="#fff"/><rect x="7.3" y="12.1" width="1.1" height="1.1" fill="#fff"/><rect x="7.3" y="14.0" width="1.1" height="1.1" fill="#fff"/><rect x="9.2" y="10.2" width="1.1" height="1.1" fill="#fff"/><rect x="9.2" y="12.1" width="1.1" height="1.1" fill="#fff"/><rect x="9.2" y="14.0" width="1.1" height="1.1" fill="#fff"/><rect x="11.1" y="10.2" width="1.1" height="1.1" fill="#fff"/><rect x="11.1" y="12.1" width="1.1" height="1.1" fill="#fff"/><rect x="11.1" y="14.0" width="1.1" height="1.1" fill="#fff"/><rect x="13.0" y="10.2" width="1.1" height="1.1" fill="#fff"/><rect x="13.0" y="12.1" width="1.1" height="1.1" fill="#fff"/><rect x="13.0" y="14.0" width="1.1" height="1.1" fill="#fff"/></svg>
<span class="t" style="left:102.50px;top:447px;font-size:13.3px;color:#000;line-height:24px;font-weight:bold;letter-spacing:0.337px;">MW 2.2</span>
<svg style="left:178px;top:453px" width="17" height="11" viewBox="0 0 17 11"><path d="M0.8 0H13.2Q14 0 14 .8V3.6H9.2L8 5.2V6.2Q8 7 7.2 7H0.8Q0 7 0 6.2V.8Q0 0 .8 0Z" fill="#4a7eb6"/><path d="M9 7.1H12.2L10.9 5.2H13L16.2 8.1L13 11H10.9L12.2 9.1H9Z" fill="#737373"/></svg>
<span class="t" style="left:210.00px;top:447px;font-size:13.3px;color:#000;line-height:24px;font-weight:bold;letter-spacing:-0.750px;">0%</span>
<span class="t" style="left:708.30px;top:447px;font-size:13.3px;color:#062166;line-height:24px;font-weight:bold;letter-spacing:-0.446px;">114.03 days</span>
<span class="t" style="left:795.00px;top:447px;font-size:13.3px;color:#062166;line-height:24px;font-weight:bold;letter-spacing:0.407px;">Mon 11/11/19</span>
<span class="t" style="left:906.30px;top:447px;font-size:13.3px;color:#062166;line-height:24px;font-weight:bold;letter-spacing:0.049px;">Fri 24/04/20</span>
<span class="t" style="left:1074.30px;top:447px;font-size:13.3px;color:#000;line-height:24px;font-weight:bold;letter-spacing:-0.710px;">NA</span>
<span class="t" style="left:1143.30px;top:447px;font-size:13.3px;color:#000;line-height:24px;font-weight:bold;letter-spacing:-0.710px;">NA</span>
<span class="t" style="left:301.30px;top:447px;font-size:13.3px;color:#062166;line-height:24px;font-weight:bold;letter-spacing:-0.154px;">Daily Scrum / Stand Up Meeting</span>
<svg style="left:290px;top:454px" width="5" height="9" viewBox="0 0 5 9"><path d="M0.5 0.6L4.5 4.5L0.5 8.4Z" fill="#fff" stroke="#8a8a8a" stroke-width="1"/></svg>
<svg style="left:63px;top:473px" width="16" height="14" viewBox="0 0 16 14"><g fill="none" stroke="#000" stroke-width="1.15"><path d="M2.6 4.6A5.6 5.6 0 0 1 13 4.2"/><path d="M13.4 8.6A5.6 5.6 0 0 1 3 9.2"/></g><path d="M10.6 3.6H15.8L13.4 6.9Z" fill="#000"/><path d="M0.2 9.6H5.4L2.6 6.3Z" fill="#000"/></svg>
<svg style="left:81px;top:471px" width="16" height="16" viewBox="0 0 16 16"><rect x="0.6" y="1.6" width="9.8" height="9.8" rx="1.2" fill="#fff" stroke="#000" stroke-width="1.1"/><path d="M3 1.6Q3 3.2 4 3.2H7Q8 3.2 8 1.6" fill="#fff" stroke="#000" stroke-width="1.1"/><rect x="4.1" y="0.3" width="2.8" height="1.6" rx=".6" fill="#fff" stroke="#000" stroke-width=".9"/><path d="M2.4 7.4L4.4 9.6L6.2 7.2" fill="none" stroke="#8b0000" stroke-width="1.3"/><path d="M6.2 7.2L8.6 4.2" fill="none" stroke="#8b0000" stroke-width="1.1" stroke-dasharray="1 .7"/><rect x="6.5" y="7.5" width="9.5" height="8.5" fill="#000"/><rect x="6.5" y="7.5" width="8" height="7" fill="#b4b4b4"/><rect x="6.5" y="7.5" width="8" height="2.2" fill="#9a9a9a"/><rect x="7.3" y="8.1" width="4.6" height="1.2" fill="#000088"/><rect x="7.3" y="10.2" width="1.1" height="1.1" fill="#fff"/><rect x="7.3" y="12.1" width="1.1" height="1.1" fill="#fff"/><rect x="7.3" y="14.0" width="1.1" height="1.1" fill="#fff"/><rect x="9.2" y="10.2" width="1.1" height="1.1" fill="#fff"/><rect x="9.2" y="12.1" width="1.1" height="1.1" fill="#fff"/><rect x="9.2" y="14.0" width="1.1" height="1.1" fill="#fff"/><rect x="11.1" y="10.2" width="1.1" height="1.1" fill="#fff"/><rect x="11.1" y="12.1" width="1.1" height="1.1" fill="#fff"/><rect x="11.1" y="14.0" width="1.1" height="1.1" fill="#fff"/><rect x="13.0" y="10.2" width="1.1" height="1.1" fill="#fff"/><rect x="13.0" y="12.1" width="1.1" height="1.1" fill="#fff"/><rect x="13.0" y="14.0" width="1.1" height="1.1" fill="#fff"/></svg>
<span class="t" style="left:102.50px;top:469px;font-size:13.3px;color:#000;line-height:24px;font-weight:bold;letter-spacing:0.337px;">MW 2.3</span>
<svg style="left:178px;top:475px" width="17" height="11" viewBox="0 0 17 11"><path d="M0.8 0H13.2Q14 0 14 .8V3.6H9.2L8 5.2V6.2Q8 7 7.2 7H0.8Q0 7 0 6.2V.8Q0 0 .8 0Z" fill="#4a7eb6"/><path d="M9 7.1H12.2L10.9 5.2H13L16.2 8.1L13 11H10.9L12.2 9.1H9Z" fill="#737373"/></svg>
<span class="t" style="left:210.00px;top:469px;font-size:13.3px;color:#000;line-height:24px;font-weight:bold;letter-spacing:-0.750px;">0%</span>
<span class="t" style="left:708.30px;top:469px;font-size:13.3px;color:#062166;line-height:24px;font-weight:bold;letter-spacing:-0.519px;">105.13 days</span>
<span class="t" style="left:795.00px;top:469px;font-size:13.3px;color:#062166;line-height:24px;font-weight:bold;letter-spacing:0.116px;">Fri 22/11/19</span>
<span class="t" style="left:906.30px;top:469px;font-size:13.3px;color:#062166;line-height:24px;font-weight:bold;letter-spacing:0.049px;">Fri 24/04/20</span>
<span class="t" style="left:1074.30px;top:469px;font-size:13.3px;color:#000;line-height:24px;font-weight:bold;letter-spacing:-0.710px;">NA</span>
<span class="t" style="left:1143.30px;top:469px;font-size:13.3px;color:#000;line-height:24px;font-weight:bold;letter-spacing:-0.710px;">NA</span>
<span class="t" style="left:301.30px;top:469px;font-size:13.3px;color:#062166;line-height:24px;font-weight:bold;">Sprint Review / Demonstration Meeting</span>
<svg style="left:289px;top:477px" width="6" height="6" viewBox="0 0 6 6"><path d="M1 5.5L5.5 1V5.5Z" fill="#5a5a5a" stroke="#3a3a3a" stroke-width="0.9" stroke-linejoin="round"/></svg>
<svg style="left:63px;top:975px" width="16" height="14" viewBox="0 0 16 14"><g fill="none" stroke="#000" stroke-width="1.15"><path d="M2.6 4.6A5.6 5.6 0 0 1 13 4.2"/><path d="M13.4 8.6A5.6 5.6 0 0 1 3 9.2"/></g><path d="M10.6 3.6H15.8L13.4 6.9Z" fill="#000"/><path d="M0.2 9.6H5.4L2.6 6.3Z" fill="#000"/></svg>
<svg style="left:81px;top:973px" width="16" height="16" viewBox="0 0 16 16"><rect x="0.6" y="1.6" width="9.8" height="9.8" rx="1.2" fill="#fff" stroke="#000" stroke-width="1.1"/><path d="M3 1.6Q3 3.2 4 3.2H7Q8 3.2 8 1.6" fill="#fff" stroke="#000" stroke-width="1.1"/><rect x="4.1" y="0.3" width="2.8" height="1.6" rx=".6" fill="#fff" stroke="#000" stroke-width=".9"/><path d="M2.4 7.4L4.4 9.6L6.2 7.2" fill="none" stroke="#8b0000" stroke-width="1.3"/><path d="M6.2 7.2L8.6 4.2" fill="none" stroke="#8b0000" stroke-width="1.1" stroke-dasharray="1 .7"/><rect x="6.5" y="7.5" width="9.5" height="8.5" fill="#000"/><rect x="6.5" y="7.5" width="8" height="7" fill="#b4b4b4"/><rect x="6.5" y="7.5" width="8" height="2.2" fill="#9a9a9a"/><rect x="7.3" y="8.1" width="4.6" height="1.2" fill="#000088"/><rect x="7.3" y="10.2" width="1.1" height="1.1" fill="#fff"/><rect x="7.3" y="12.1" width="1.1" height="1.1" fill="#fff"/><rect x="7.3" y="14.0" width="1.1" height="1.1" fill="#fff"/><rect x="9.2" y="10.2" width="1.1" height="1.1" fill="#fff"/><rect x="9.2" y="12.1" width="1.1" height="1.1" fill="#fff"/><rect x="9.2" y="14.0" width="1.1" height="1.1" fill="#fff"/><rect x="11.1" y="10.2" width="1.1" height="1.1" fill="#fff"/><rect x="11.1" y="12.1" width="1.1" height="1.1" fill="#fff"/><rect x="11.1" y="14.0" width="1.1" height="1.1" fill="#fff"/><rect x="13.0" y="10.2" width="1.1" height="1.1" fill="#fff"/><rect x="13.0" y="12.1" width="1.1" height="1.1" fill="#fff"/><rect x="13.0" y="14.0" width="1.1" height="1.1" fill="#fff"/></svg>
<span class="t" style="left:102.50px;top:971px;font-size:13.3px;color:#000;line-height:24px;font-weight:bold;letter-spacing:0.337px;">MW 2.4</span>
<svg style="left:178px;top:977px" width="17" height="11" viewBox="0 0 17 11"><path d="M0.8 0H13.2Q14 0 14 .8V3.6H9.2L8 5.2V6.2Q8 7 7.2 7H0.8Q0 7 0 6.2V.8Q0 0 .8 0Z" fill="#4a7eb6"/><path d="M9 7.1H12.2L10.9 5.2H13L16.2 8.1L13 11H10.9L12.2 9.1H9Z" fill="#737373"/></svg>
<span class="t" style="left:210.00px;top:971px;font-size:13.3px;color:#000;line-height:24px;font-weight:bold;letter-spacing:-0.750px;">0%</span>
<span class="t" style="left:708.30px;top:971px;font-size:13.3px;color:#062166;line-height:24px;font-weight:bold;letter-spacing:-0.519px;">105.13 days</span>
<span class="t" style="left:795.00px;top:971px;font-size:13.3px;color:#062166;line-height:24px;font-weight:bold;letter-spacing:0.116px;">Fri 22/11/19</span>
<span class="t" style="left:906.30px;top:971px;font-size:13.3px;color:#062166;line-height:24px;font-weight:bold;letter-spacing:0.049px;">Fri 24/04/20</span>
<span class="t" style="left:1074.30px;top:971px;font-size:13.3px;color:#000;line-height:24px;font-weight:bold;letter-spacing:-0.710px;">NA</span>
<span class="t" style="left:1143.30px;top:971px;font-size:13.3px;color:#000;line-height:24px;font-weight:bold;letter-spacing:-0.710px;">NA</span>
<span class="t" style="left:301.30px;top:971px;font-size:13.3px;color:#062166;line-height:24px;font-weight:bold;letter-spacing:-0.082px;">Sprint Retrospective Meeting</span>
<svg style="left:290px;top:978px" width="5" height="9" viewBox="0 0 5 9"><path d="M0.5 0.6L4.5 4.5L0.5 8.4Z" fill="#fff" stroke="#8a8a8a" stroke-width="1"/></svg>
<svg style="left:63px;top:1019px" width="16" height="14" viewBox="0 0 16 14"><g fill="none" stroke="#000" stroke-width="1.15"><path d="M2.6 4.6A5.6 5.6 0 0 1 13 4.2"/><path d="M13.4 8.6A5.6 5.6 0 0 1 3 9.2"/></g><path d="M10.6 3.6H15.8L13.4 6.9Z" fill="#000"/><path d="M0.2 9.6H5.4L2.6 6.3Z" fill="#000"/></svg>
<svg style="left:81px;top:1017px" width="16" height="16" viewBox="0 0 16 16"><rect x="0.6" y="1.6" width="9.8" height="9.8" rx="1.2" fill="#fff" stroke="#000" stroke-width="1.1"/><path d="M3 1.6Q3 3.2 4 3.2H7Q8 3.2 8 1.6" fill="#fff" stroke="#000" stroke-width="1.1"/><rect x="4.1" y="0.3" width="2.8" height="1.6" rx=".6" fill="#fff" stroke="#000" stroke-width=".9"/><path d="M2.4 7.4L4.4 9.6L6.2 7.2" fill="none" stroke="#8b0000" stroke-width="1.3"/><path d="M6.2 7.2L8.6 4.2" fill="none" stroke="#8b0000" stroke-width="1.1" stroke-dasharray="1 .7"/><rect x="6.5" y="7.5" width="9.5" height="8.5" fill="#000"/><rect x="6.5" y="7.5" width="8" height="7" fill="#b4b4b4"/><rect x="6.5" y="7.5" width="8" height="2.2" fill="#9a9a9a"/><rect x="7.3" y="8.1" width="4.6" height="1.2" fill="#000088"/><rect x="7.3" y="10.2" width="1.1" height="1.1" fill="#fff"/><rect x="7.3" y="12.1" width="1.1" height="1.1" fill="#fff"/><rect x="7.3" y="14.0" width="1.1" height="1.1" fill="#fff"/><rect x="9.2" y="10.2" width="1.1" height="1.1" fill="#fff"/><rect x="9.2" y="12.1" width="1.1" height="1.1" fill="#fff"/><rect x="9.2" y="14.0" width="1.1" height="1.1" fill="#fff"/><rect x="11.1" y="10.2" width="1.1" height="1.1" fill="#fff"/><rect x="11.1" y="12.1" width="1.1" height="1.1" fill="#fff"/><rect x="11.1" y="14.0" width="1.1" height="1.1" fill="#fff"/><rect x="13.0" y="10.2" width="1.1" height="1.1" fill="#fff"/><rect x="13.0" y="12.1" width="1.1" height="1.1" fill="#fff"/><rect x="13.0" y="14.0" width="1.1" height="1.1" fill="#fff"/></svg>
<span class="t" style="left:102.50px;top:1015px;font-size:13.3px;color:#000;line-height:24px;font-weight:bold;letter-spacing:0.525px;">MW 3</span>
<svg style="left:178px;top:1021px" width="17" height="11" viewBox="0 0 17 11"><path d="M0.8 0H13.2Q14 0 14 .8V3.6H9.2L8 5.2V6.2Q8 7 7.2 7H0.8Q0 7 0 6.2V.8Q0 0 .8 0Z" fill="#4a7eb6"/><path d="M9 7.1H12.2L10.9 5.2H13L16.2 8.1L13 11H10.9L12.2 9.1H9Z" fill="#737373"/></svg>
<span class="t" style="left:210.00px;top:1015px;font-size:13.3px;color:#000;line-height:24px;font-weight:bold;letter-spacing:-0.750px;">0%</span>
<span class="t" style="left:708.30px;top:1015px;font-size:13.3px;color:#062166;line-height:24px;font-weight:bold;letter-spacing:-0.524px;">116 days</span>
<span class="t" style="left:795.00px;top:1015px;font-size:13.3px;color:#062166;line-height:24px;font-weight:bold;letter-spacing:0.407px;">Mon 11/11/19</span>
<span class="t" style="left:906.30px;top:1015px;font-size:13.3px;color:#062166;line-height:24px;font-weight:bold;letter-spacing:0.291px;">Mon 27/04/20</span>
<span class="t" style="left:1074.30px;top:1015px;font-size:13.3px;color:#000;line-height:24px;font-weight:bold;letter-spacing:-0.710px;">NA</span>
<span class="t" style="left:1143.30px;top:1015px;font-size:13.3px;color:#000;line-height:24px;font-weight:bold;letter-spacing:-0.710px;">NA</span>
<svg style="left:257px;top:130px" width="6" height="6" viewBox="0 0 6 6"><path d="M1 5.5L5.5 1V5.5Z" fill="#5a5a5a" stroke="#3a3a3a" stroke-width="0.9" stroke-linejoin="round"/></svg>
<span class="t" style="left:269.70px;top:122px;font-size:17.9px;color:#000;line-height:24px;font-weight:bold;letter-spacing:0.027px;">MW MS Project Plan Template</span>
<svg style="left:273px;top:225px" width="6" height="6" viewBox="0 0 6 6"><path d="M1 5.5L5.5 1V5.5Z" fill="#5a5a5a" stroke="#3a3a3a" stroke-width="0.9" stroke-linejoin="round"/></svg>
<span class="t" style="left:285.50px;top:217px;font-size:16.3px;color:#000;line-height:24px;font-weight:bold;letter-spacing:0.123px;">Project key milestones (amend Generic MS Plan:</span>
<span class="t" style="left:285.50px;top:240px;font-size:16.3px;color:#000;line-height:24px;font-weight:bold;letter-spacing:0.146px;">Start Date, Sprint and Ceremony details (if Agile is</span>
<span class="t" style="left:285.50px;top:263px;font-size:16.3px;color:#000;line-height:24px;font-weight:bold;letter-spacing:0.038px;">being used) and tasks based on project context)</span>
<svg style="left:273px;top:409px" width="6" height="6" viewBox="0 0 6 6"><path d="M1 5.5L5.5 1V5.5Z" fill="#5a5a5a" stroke="#3a3a3a" stroke-width="0.9" stroke-linejoin="round"/></svg>
<span class="t" style="left:285.20px;top:401px;font-size:16.3px;color:#062166;line-height:24px;font-weight:bold;letter-spacing:0.121px;">Agile Ceremonies</span>
<svg style="left:274px;top:1023px" width="5" height="9" viewBox="0 0 5 9"><path d="M0.5 0.6L4.5 4.5L0.5 8.4Z" fill="#fff" stroke="#8a8a8a" stroke-width="1"/></svg>
<span class="t" style="left:285.00px;top:1016px;font-size:14.8px;color:#062166;line-height:24px;font-weight:bold;letter-spacing:0.101px;">Sprints Overview (2-week sprints - amend number and</span>
<span class="t" style="left:1269.30px;top:119px;font-size:14.4px;color:#000;line-height:24px;font-weight:bold;letter-spacing:-0.134px;">Set Baseline Start/Finish once plan has</span>
<span class="t" style="left:1269.30px;top:138px;font-size:14.4px;color:#000;line-height:24px;font-weight:bold;letter-spacing:-0.086px;">been published</span>
<span class="t" style="left:1269.30px;top:215px;font-size:13.3px;color:#000;line-height:24px;font-weight:bold;letter-spacing:-0.336px;">Checklist of main tasks summarised</span>
<span class="t" style="left:1269.30px;top:1015px;font-size:13.3px;color:#000;line-height:24px;font-weight:bold;letter-spacing:-0.112px;">2-week sprints - amend appropriately and</span>
<div style="left:1267px;top:1030px;width:272px;height:10px;overflow:hidden;">
<span class="t" style="left:2.30px;top:2px;font-size:13.3px;color:#000;line-height:24px;font-weight:bold;letter-spacing:0.257px;">add or delete as needed for each project delivery</span>
</div>
<svg style="left:64px;top:494px" width="14" height="12" viewBox="0 0 14 12"><rect x="0" y="0" width="14" height="12" fill="#4f6f9a"/><rect x="0" y="0" width="14" height="3" fill="#5c8fe6"/><rect x="1" y="1" width="12" height=".9" fill="#8ab0f4"/><rect x="9.2" y="5.4" width="3.8" height="3.6" fill="#0a78a6"/><rect x="1" y="3.2" width="2.1" height="2" fill="#fff"/><rect x="4" y="3.2" width="2.1" height="2" fill="#fff"/><rect x="7" y="3.2" width="2.1" height="2" fill="#fff"/><rect x="10" y="3.2" width="2.1" height="2" fill="#fff"/><rect x="1" y="6.2" width="2.1" height="2" fill="#fff"/><rect x="4" y="6.2" width="2.1" height="2" fill="#b4cce4"/><rect x="7" y="6.2" width="2.1" height="2" fill="#fff"/><rect x="10" y="6.2" width="2.1" height="2" fill="#35cdff"/><rect x="1" y="9.2" width="2.1" height="2" fill="#fff"/><rect x="4" y="9.2" width="2.1" height="2" fill="#fff"/><rect x="7" y="9.2" width="2.1" height="2" fill="#fff"/><rect x="10" y="9.2" width="2.1" height="2" fill="#fff"/></svg>
<svg style="left:82px;top:494px" width="14" height="14" viewBox="0 0 14 14"><path d="M0 0H14V14H6V8H0Z" fill="#e8c580"/><path d="M0 9H5V14Z" fill="#e8c580"/></svg>
<svg style="left:63px;top:511px" width="16" height="16" viewBox="0 0 16 16"><rect x="0.6" y="1.6" width="9.8" height="9.8" rx="1.2" fill="#fff" stroke="#000" stroke-width="1.1"/><path d="M3 1.6Q3 3.2 4 3.2H7Q8 3.2 8 1.6" fill="#fff" stroke="#000" stroke-width="1.1"/><rect x="4.1" y="0.3" width="2.8" height="1.6" rx=".6" fill="#fff" stroke="#000" stroke-width=".9"/><path d="M2.4 7.4L4.4 9.6L6.2 7.2" fill="none" stroke="#8b0000" stroke-width="1.3"/><path d="M6.2 7.2L8.6 4.2" fill="none" stroke="#8b0000" stroke-width="1.1" stroke-dasharray="1 .7"/><rect x="6.5" y="7.5" width="9.5" height="8.5" fill="#000"/><rect x="6.5" y="7.5" width="8" height="7" fill="#b4b4b4"/><rect x="6.5" y="7.5" width="8" height="2.2" fill="#9a9a9a"/><rect x="7.3" y="8.1" width="4.6" height="1.2" fill="#000088"/><rect x="7.3" y="10.2" width="1.1" height="1.1" fill="#fff"/><rect x="7.3" y="12.1" width="1.1" height="1.1" fill="#fff"/><rect x="7.3" y="14.0" width="1.1" height="1.1" fill="#fff"/><rect x="9.2" y="10.2" width="1.1" height="1.1" fill="#fff"/><rect x="9.2" y="12.1" width="1.1" height="1.1" fill="#fff"/><rect x="9.2" y="14.0" width="1.1" height="1.1" fill="#fff"/><rect x="11.1" y="10.2" width="1.1" height="1.1" fill="#fff"/><rect x="11.1" y="12.1" width="1.1" height="1.1" fill="#fff"/><rect x="11.1" y="14.0" width="1.1" height="1.1" fill="#fff"/><rect x="13.0" y="10.2" width="1.1" height="1.1" fill="#fff"/><rect x="13.0" y="12.1" width="1.1" height="1.1" fill="#fff"/><rect x="13.0" y="14.0" width="1.1" height="1.1" fill="#fff"/></svg>
<span class="t" style="left:102.50px;top:491px;font-size:13.3px;color:#000;line-height:24px;letter-spacing:-0.087px;">MW 2.3.1</span>
<svg style="left:178px;top:497px" width="17" height="11" viewBox="0 0 17 11"><path d="M0.8 0H13.2Q14 0 14 .8V3.6H9.2L8 5.2V6.2Q8 7 7.2 7H0.8Q0 7 0 6.2V.8Q0 0 .8 0Z" fill="#4a7eb6"/><path d="M9 7.1H12.2L10.9 5.2H13L16.2 8.1L13 11H10.9L12.2 9.1H9Z" fill="#737373"/></svg>
<span class="t" style="left:210.00px;top:491px;font-size:13.3px;color:#000;line-height:24px;letter-spacing:-0.750px;">0%</span>
<span class="t" style="left:317.00px;top:491px;font-size:13.3px;color:#000;line-height:24px;letter-spacing:0.376px;">Sprint Review / Demonstration Meeting 1</span>
<span class="t" style="left:708.30px;top:491px;font-size:13.3px;color:#000;line-height:24px;letter-spacing:-0.140px;">1 hr</span>
<span class="t" style="left:795.00px;top:491px;font-size:13.3px;color:#000;line-height:24px;letter-spacing:0.228px;">Fri 22/11/19</span>
<span class="t" style="left:906.30px;top:491px;font-size:13.3px;color:#000;line-height:24px;letter-spacing:0.228px;">Fri 22/11/19</span>
<span class="t" style="left:1074.30px;top:491px;font-size:13.3px;color:#000;line-height:24px;letter-spacing:-0.477px;">NA</span>
<span class="t" style="left:1143.30px;top:491px;font-size:13.3px;color:#000;line-height:24px;letter-spacing:-0.477px;">NA</span>
<svg style="left:64px;top:534px" width="14" height="12" viewBox="0 0 14 12"><rect x="0" y="0" width="14" height="12" fill="#4f6f9a"/><rect x="0" y="0" width="14" height="3" fill="#5c8fe6"/><rect x="1" y="1" width="12" height=".9" fill="#8ab0f4"/><rect x="9.2" y="5.4" width="3.8" height="3.6" fill="#0a78a6"/><rect x="1" y="3.2" width="2.1" height="2" fill="#fff"/><rect x="4" y="3.2" width="2.1" height="2" fill="#fff"/><rect x="7" y="3.2" width="2.1" height="2" fill="#fff"/><rect x="10" y="3.2" width="2.1" height="2" fill="#fff"/><rect x="1" y="6.2" width="2.1" height="2" fill="#fff"/><rect x="4" y="6.2" width="2.1" height="2" fill="#b4cce4"/><rect x="7" y="6.2" width="2.1" height="2" fill="#fff"/><rect x="10" y="6.2" width="2.1" height="2" fill="#35cdff"/><rect x="1" y="9.2" width="2.1" height="2" fill="#fff"/><rect x="4" y="9.2" width="2.1" height="2" fill="#fff"/><rect x="7" y="9.2" width="2.1" height="2" fill="#fff"/><rect x="10" y="9.2" width="2.1" height="2" fill="#fff"/></svg>
<svg style="left:82px;top:534px" width="14" height="14" viewBox="0 0 14 14"><path d="M0 0H14V14H6V8H0Z" fill="#e8c580"/><path d="M0 9H5V14Z" fill="#e8c580"/></svg>
<svg style="left:63px;top:551px" width="16" height="16" viewBox="0 0 16 16"><rect x="0.6" y="1.6" width="9.8" height="9.8" rx="1.2" fill="#fff" stroke="#000" stroke-width="1.1"/><path d="M3 1.6Q3 3.2 4 3.2H7Q8 3.2 8 1.6" fill="#fff" stroke="#000" stroke-width="1.1"/><rect x="4.1" y="0.3" width="2.8" height="1.6" rx=".6" fill="#fff" stroke="#000" stroke-width=".9"/><path d="M2.4 7.4L4.4 9.6L6.2 7.2" fill="none" stroke="#8b0000" stroke-width="1.3"/><path d="M6.2 7.2L8.6 4.2" fill="none" stroke="#8b0000" stroke-width="1.1" stroke-dasharray="1 .7"/><rect x="6.5" y="7.5" width="9.5" height="8.5" fill="#000"/><rect x="6.5" y="7.5" width="8" height="7" fill="#b4b4b4"/><rect x="6.5" y="7.5" width="8" height="2.2" fill="#9a9a9a"/><rect x="7.3" y="8.1" width="4.6" height="1.2" fill="#000088"/><rect x="7.3" y="10.2" width="1.1" height="1.1" fill="#fff"/><rect x="7.3" y="12.1" width="1.1" height="1.1" fill="#fff"/><rect x="7.3" y="14.0" width="1.1" height="1.1" fill="#fff"/><rect x="9.2" y="10.2" width="1.1" height="1.1" fill="#fff"/><rect x="9.2" y="12.1" width="1.1" height="1.1" fill="#fff"/><rect x="9.2" y="14.0" width="1.1" height="1.1" fill="#fff"/><rect x="11.1" y="10.2" width="1.1" height="1.1" fill="#fff"/><rect x="11.1" y="12.1" width="1.1" height="1.1" fill="#fff"/><rect x="11.1" y="14.0" width="1.1" height="1.1" fill="#fff"/><rect x="13.0" y="10.2" width="1.1" height="1.1" fill="#fff"/><rect x="13.0" y="12.1" width="1.1" height="1.1" fill="#fff"/><rect x="13.0" y="14.0" width="1.1" height="1.1" fill="#fff"/></svg>
<span class="t" style="left:102.50px;top:531px;font-size:13.3px;color:#000;line-height:24px;letter-spacing:-0.087px;">MW 2.3.2</span>
<svg style="left:178px;top:537px" width="17" height="11" viewBox="0 0 17 11"><path d="M0.8 0H13.2Q14 0 14 .8V3.6H9.2L8 5.2V6.2Q8 7 7.2 7H0.8Q0 7 0 6.2V.8Q0 0 .8 0Z" fill="#4a7eb6"/><path d="M9 7.1H12.2L10.9 5.2H13L16.2 8.1L13 11H10.9L12.2 9.1H9Z" fill="#737373"/></svg>
<span class="t" style="left:210.00px;top:531px;font-size:13.3px;color:#000;line-height:24px;letter-spacing:-0.750px;">0%</span>
<span class="t" style="left:317.00px;top:531px;font-size:13.3px;color:#000;line-height:24px;letter-spacing:0.376px;">Sprint Review / Demonstration Meeting 2</span>
<span class="t" style="left:708.30px;top:531px;font-size:13.3px;color:#000;line-height:24px;letter-spacing:-0.140px;">1 hr</span>
<span class="t" style="left:795.00px;top:531px;font-size:13.3px;color:#000;line-height:24px;letter-spacing:0.139px;">Fri 06/12/19</span>
<span class="t" style="left:906.30px;top:531px;font-size:13.3px;color:#000;line-height:24px;letter-spacing:0.139px;">Fri 06/12/19</span>
<span class="t" style="left:1074.30px;top:531px;font-size:13.3px;color:#000;line-height:24px;letter-spacing:-0.477px;">NA</span>
<span class="t" style="left:1143.30px;top:531px;font-size:13.3px;color:#000;line-height:24px;letter-spacing:-0.477px;">NA</span>
<svg style="left:64px;top:574px" width="14" height="12" viewBox="0 0 14 12"><rect x="0" y="0" width="14" height="12" fill="#4f6f9a"/><rect x="0" y="0" width="14" height="3" fill="#5c8fe6"/><rect x="1" y="1" width="12" height=".9" fill="#8ab0f4"/><rect x="9.2" y="5.4" width="3.8" height="3.6" fill="#0a78a6"/><rect x="1" y="3.2" width="2.1" height="2" fill="#fff"/><rect x="4" y="3.2" width="2.1" height="2" fill="#fff"/><rect x="7" y="3.2" width="2.1" height="2" fill="#fff"/><rect x="10" y="3.2" width="2.1" height="2" fill="#fff"/><rect x="1" y="6.2" width="2.1" height="2" fill="#fff"/><rect x="4" y="6.2" width="2.1" height="2" fill="#b4cce4"/><rect x="7" y="6.2" width="2.1" height="2" fill="#fff"/><rect x="10" y="6.2" width="2.1" height="2" fill="#35cdff"/><rect x="1" y="9.2" width="2.1" height="2" fill="#fff"/><rect x="4" y="9.2" width="2.1" height="2" fill="#fff"/><rect x="7" y="9.2" width="2.1" height="2" fill="#fff"/><rect x="10" y="9.2" width="2.1" height="2" fill="#fff"/></svg>
<svg style="left:81px;top:573px" width="16" height="16" viewBox="0 0 16 16"><rect x="0.6" y="1.6" width="9.8" height="9.8" rx="1.2" fill="#fff" stroke="#000" stroke-width="1.1"/><path d="M3 1.6Q3 3.2 4 3.2H7Q8 3.2 8 1.6" fill="#fff" stroke="#000" stroke-width="1.1"/><rect x="4.1" y="0.3" width="2.8" height="1.6" rx=".6" fill="#fff" stroke="#000" stroke-width=".9"/><path d="M2.4 7.4L4.4 9.6L6.2 7.2" fill="none" stroke="#8b0000" stroke-width="1.3"/><path d="M6.2 7.2L8.6 4.2" fill="none" stroke="#8b0000" stroke-width="1.1" stroke-dasharray="1 .7"/><rect x="6.5" y="7.5" width="9.5" height="8.5" fill="#000"/><rect x="6.5" y="7.5" width="8" height="7" fill="#b4b4b4"/><rect x="6.5" y="7.5" width="8" height="2.2" fill="#9a9a9a"/><rect x="7.3" y="8.1" width="4.6" height="1.2" fill="#000088"/><rect x="7.3" y="10.2" width="1.1" height="1.1" fill="#fff"/><rect x="7.3" y="12.1" width="1.1" height="1.1" fill="#fff"/><rect x="7.3" y="14.0" width="1.1" height="1.1" fill="#fff"/><rect x="9.2" y="10.2" width="1.1" height="1.1" fill="#fff"/><rect x="9.2" y="12.1" width="1.1" height="1.1" fill="#fff"/><rect x="9.2" y="14.0" width="1.1" height="1.1" fill="#fff"/><rect x="11.1" y="10.2" width="1.1" height="1.1" fill="#fff"/><rect x="11.1" y="12.1" width="1.1" height="1.1" fill="#fff"/><rect x="11.1" y="14.0" width="1.1" height="1.1" fill="#fff"/><rect x="13.0" y="10.2" width="1.1" height="1.1" fill="#fff"/><rect x="13.0" y="12.1" width="1.1" height="1.1" fill="#fff"/><rect x="13.0" y="14.0" width="1.1" height="1.1" fill="#fff"/></svg>
<span class="t" style="left:102.50px;top:571px;font-size:13.3px;color:#000;line-height:24px;letter-spacing:-0.087px;">MW 2.3.3</span>
<svg style="left:178px;top:577px" width="17" height="11" viewBox="0 0 17 11"><path d="M0.8 0H13.2Q14 0 14 .8V3.6H9.2L8 5.2V6.2Q8 7 7.2 7H0.8Q0 7 0 6.2V.8Q0 0 .8 0Z" fill="#4a7eb6"/><path d="M9 7.1H12.2L10.9 5.2H13L16.2 8.1L13 11H10.9L12.2 9.1H9Z" fill="#737373"/></svg>
<span class="t" style="left:210.00px;top:571px;font-size:13.3px;color:#000;line-height:24px;letter-spacing:-0.750px;">0%</span>
<span class="t" style="left:317.00px;top:571px;font-size:13.3px;color:#000;line-height:24px;letter-spacing:0.376px;">Sprint Review / Demonstration Meeting 3</span>
<span class="t" style="left:708.30px;top:571px;font-size:13.3px;color:#000;line-height:24px;letter-spacing:-0.140px;">1 hr</span>
<span class="t" style="left:795.00px;top:571px;font-size:13.3px;color:#000;line-height:24px;letter-spacing:0.139px;">Fri 20/12/19</span>
<span class="t" style="left:906.30px;top:571px;font-size:13.3px;color:#000;line-height:24px;letter-spacing:0.139px;">Fri 20/12/19</span>
<span class="t" style="left:1074.30px;top:571px;font-size:13.3px;color:#000;line-height:24px;letter-spacing:-0.477px;">NA</span>
<span class="t" style="left:1143.30px;top:571px;font-size:13.3px;color:#000;line-height:24px;letter-spacing:-0.477px;">NA</span>
<svg style="left:64px;top:614px" width="14" height="12" viewBox="0 0 14 12"><rect x="0" y="0" width="14" height="12" fill="#4f6f9a"/><rect x="0" y="0" width="14" height="3" fill="#5c8fe6"/><rect x="1" y="1" width="12" height=".9" fill="#8ab0f4"/><rect x="9.2" y="5.4" width="3.8" height="3.6" fill="#0a78a6"/><rect x="1" y="3.2" width="2.1" height="2" fill="#fff"/><rect x="4" y="3.2" width="2.1" height="2" fill="#fff"/><rect x="7" y="3.2" width="2.1" height="2" fill="#fff"/><rect x="10" y="3.2" width="2.1" height="2" fill="#fff"/><rect x="1" y="6.2" width="2.1" height="2" fill="#fff"/><rect x="4" y="6.2" width="2.1" height="2" fill="#b4cce4"/><rect x="7" y="6.2" width="2.1" height="2" fill="#fff"/><rect x="10" y="6.2" width="2.1" height="2" fill="#35cdff"/><rect x="1" y="9.2" width="2.1" height="2" fill="#fff"/><rect x="4" y="9.2" width="2.1" height="2" fill="#fff"/><rect x="7" y="9.2" width="2.1" height="2" fill="#fff"/><rect x="10" y="9.2" width="2.1" height="2" fill="#fff"/></svg>
<svg style="left:81px;top:613px" width="16" height="16" viewBox="0 0 16 16"><rect x="0.6" y="1.6" width="9.8" height="9.8" rx="1.2" fill="#fff" stroke="#000" stroke-width="1.1"/><path d="M3 1.6Q3 3.2 4 3.2H7Q8 3.2 8 1.6" fill="#fff" stroke="#000" stroke-width="1.1"/><rect x="4.1" y="0.3" width="2.8" height="1.6" rx=".6" fill="#fff" stroke="#000" stroke-width=".9"/><path d="M2.4 7.4L4.4 9.6L6.2 7.2" fill="none" stroke="#8b0000" stroke-width="1.3"/><path d="M6.2 7.2L8.6 4.2" fill="none" stroke="#8b0000" stroke-width="1.1" stroke-dasharray="1 .7"/><rect x="6.5" y="7.5" width="9.5" height="8.5" fill="#000"/><rect x="6.5" y="7.5" width="8" height="7" fill="#b4b4b4"/><rect x="6.5" y="7.5" width="8" height="2.2" fill="#9a9a9a"/><rect x="7.3" y="8.1" width="4.6" height="1.2" fill="#000088"/><rect x="7.3" y="10.2" width="1.1" height="1.1" fill="#fff"/><rect x="7.3" y="12.1" width="1.1" height="1.1" fill="#fff"/><rect x="7.3" y="14.0" width="1.1" height="1.1" fill="#fff"/><rect x="9.2" y="10.2" width="1.1" height="1.1" fill="#fff"/><rect x="9.2" y="12.1" width="1.1" height="1.1" fill="#fff"/><rect x="9.2" y="14.0" width="1.1" height="1.1" fill="#fff"/><rect x="11.1" y="10.2" width="1.1" height="1.1" fill="#fff"/><rect x="11.1" y="12.1" width="1.1" height="1.1" fill="#fff"/><rect x="11.1" y="14.0" width="1.1" height="1.1" fill="#fff"/><rect x="13.0" y="10.2" width="1.1" height="1.1" fill="#fff"/><rect x="13.0" y="12.1" width="1.1" height="1.1" fill="#fff"/><rect x="13.0" y="14.0" width="1.1" height="1.1" fill="#fff"/></svg>
<span class="t" style="left:102.50px;top:611px;font-size:13.3px;color:#000;line-height:24px;letter-spacing:-0.087px;">MW 2.3.4</span>
<svg style="left:178px;top:617px" width="17" height="11" viewBox="0 0 17 11"><path d="M0.8 0H13.2Q14 0 14 .8V3.6H9.2L8 5.2V6.2Q8 7 7.2 7H0.8Q0 7 0 6.2V.8Q0 0 .8 0Z" fill="#4a7eb6"/><path d="M9 7.1H12.2L10.9 5.2H13L16.2 8.1L13 11H10.9L12.2 9.1H9Z" fill="#737373"/></svg>
<span class="t" style="left:210.00px;top:611px;font-size:13.3px;color:#000;line-height:24px;letter-spacing:-0.750px;">0%</span>
<span class="t" style="left:317.00px;top:611px;font-size:13.3px;color:#000;line-height:24px;letter-spacing:0.376px;">Sprint Review / Demonstration Meeting 4</span>
<span class="t" style="left:708.30px;top:611px;font-size:13.3px;color:#000;line-height:24px;letter-spacing:-0.140px;">1 hr</span>
<span class="t" style="left:795.00px;top:611px;font-size:13.3px;color:#000;line-height:24px;letter-spacing:0.139px;">Fri 03/01/20</span>
<span class="t" style="left:906.30px;top:611px;font-size:13.3px;color:#000;line-height:24px;letter-spacing:0.139px;">Fri 03/01/20</span>
<span class="t" style="left:1074.30px;top:611px;font-size:13.3px;color:#000;line-height:24px;letter-spacing:-0.477px;">NA</span>
<span class="t" style="left:1143.30px;top:611px;font-size:13.3px;color:#000;line-height:24px;letter-spacing:-0.477px;">NA</span>
<svg style="left:64px;top:654px" width="14" height="12" viewBox="0 0 14 12"><rect x="0" y="0" width="14" height="12" fill="#4f6f9a"/><rect x="0" y="0" width="14" height="3" fill="#5c8fe6"/><rect x="1" y="1" width="12" height=".9" fill="#8ab0f4"/><rect x="9.2" y="5.4" width="3.8" height="3.6" fill="#0a78a6"/><rect x="1" y="3.2" width="2.1" height="2" fill="#fff"/><rect x="4" y="3.2" width="2.1" height="2" fill="#fff"/><rect x="7" y="3.2" width="2.1" height="2" fill="#fff"/><rect x="10" y="3.2" width="2.1" height="2" fill="#fff"/><rect x="1" y="6.2" width="2.1" height="2" fill="#fff"/><rect x="4" y="6.2" width="2.1" height="2" fill="#b4cce4"/><rect x="7" y="6.2" width="2.1" height="2" fill="#fff"/><rect x="10" y="6.2" width="2.1" height="2" fill="#35cdff"/><rect x="1" y="9.2" width="2.1" height="2" fill="#fff"/><rect x="4" y="9.2" width="2.1" height="2" fill="#fff"/><rect x="7" y="9.2" width="2.1" height="2" fill="#fff"/><rect x="10" y="9.2" width="2.1" height="2" fill="#fff"/></svg>
<svg style="left:81px;top:653px" width="16" height="16" viewBox="0 0 16 16"><rect x="0.6" y="1.6" width="9.8" height="9.8" rx="1.2" fill="#fff" stroke="#000" stroke-width="1.1"/><path d="M3 1.6Q3 3.2 4 3.2H7Q8 3.2 8 1.6" fill="#fff" stroke="#000" stroke-width="1.1"/><rect x="4.1" y="0.3" width="2.8" height="1.6" rx=".6" fill="#fff" stroke="#000" stroke-width=".9"/><path d="M2.4 7.4L4.4 9.6L6.2 7.2" fill="none" stroke="#8b0000" stroke-width="1.3"/><path d="M6.2 7.2L8.6 4.2" fill="none" stroke="#8b0000" stroke-width="1.1" stroke-dasharray="1 .7"/><rect x="6.5" y="7.5" width="9.5" height="8.5" fill="#000"/><rect x="6.5" y="7.5" width="8" height="7" fill="#b4b4b4"/><rect x="6.5" y="7.5" width="8" height="2.2" fill="#9a9a9a"/><rect x="7.3" y="8.1" width="4.6" height="1.2" fill="#000088"/><rect x="7.3" y="10.2" width="1.1" height="1.1" fill="#fff"/><rect x="7.3" y="12.1" width="1.1" height="1.1" fill="#fff"/><rect x="7.3" y="14.0" width="1.1" height="1.1" fill="#fff"/><rect x="9.2" y="10.2" width="1.1" height="1.1" fill="#fff"/><rect x="9.2" y="12.1" width="1.1" height="1.1" fill="#fff"/><rect x="9.2" y="14.0" width="1.1" height="1.1" fill="#fff"/><rect x="11.1" y="10.2" width="1.1" height="1.1" fill="#fff"/><rect x="11.1" y="12.1" width="1.1" height="1.1" fill="#fff"/><rect x="11.1" y="14.0" width="1.1" height="1.1" fill="#fff"/><rect x="13.0" y="10.2" width="1.1" height="1.1" fill="#fff"/><rect x="13.0" y="12.1" width="1.1" height="1.1" fill="#fff"/><rect x="13.0" y="14.0" width="1.1" height="1.1" fill="#fff"/></svg>
<span class="t" style="left:102.50px;top:651px;font-size:13.3px;color:#000;line-height:24px;letter-spacing:-0.087px;">MW 2.3.5</span>
<svg style="left:178px;top:657px" width="17" height="11" viewBox="0 0 17 11"><path d="M0.8 0H13.2Q14 0 14 .8V3.6H9.2L8 5.2V6.2Q8 7 7.2 7H0.8Q0 7 0 6.2V.8Q0 0 .8 0Z" fill="#4a7eb6"/><path d="M9 7.1H12.2L10.9 5.2H13L16.2 8.1L13 11H10.9L12.2 9.1H9Z" fill="#737373"/></svg>
<span class="t" style="left:210.00px;top:651px;font-size:13.3px;color:#000;line-height:24px;letter-spacing:-0.750px;">0%</span>
<span class="t" style="left:317.00px;top:651px;font-size:13.3px;color:#000;line-height:24px;letter-spacing:0.376px;">Sprint Review / Demonstration Meeting 5</span>
<span class="t" style="left:708.30px;top:651px;font-size:13.3px;color:#000;line-height:24px;letter-spacing:-0.140px;">1 hr</span>
<span class="t" style="left:795.00px;top:651px;font-size:13.3px;color:#000;line-height:24px;letter-spacing:0.139px;">Fri 17/01/20</span>
<span class="t" style="left:906.30px;top:651px;font-size:13.3px;color:#000;line-height:24px;letter-spacing:0.139px;">Fri 17/01/20</span>
<span class="t" style="left:1074.30px;top:651px;font-size:13.3px;color:#000;line-height:24px;letter-spacing:-0.477px;">NA</span>
<span class="t" style="left:1143.30px;top:651px;font-size:13.3px;color:#000;line-height:24px;letter-spacing:-0.477px;">NA</span>
<svg style="left:64px;top:694px" width="14" height="12" viewBox="0 0 14 12"><rect x="0" y="0" width="14" height="12" fill="#4f6f9a"/><rect x="0" y="0" width="14" height="3" fill="#5c8fe6"/><rect x="1" y="1" width="12" height=".9" fill="#8ab0f4"/><rect x="9.2" y="5.4" width="3.8" height="3.6" fill="#0a78a6"/><rect x="1" y="3.2" width="2.1" height="2" fill="#fff"/><rect x="4" y="3.2" width="2.1" height="2" fill="#fff"/><rect x="7" y="3.2" width="2.1" height="2" fill="#fff"/><rect x="10" y="3.2" width="2.1" height="2" fill="#fff"/><rect x="1" y="6.2" width="2.1" height="2" fill="#fff"/><rect x="4" y="6.2" width="2.1" height="2" fill="#b4cce4"/><rect x="7" y="6.2" width="2.1" height="2" fill="#fff"/><rect x="10" y="6.2" width="2.1" height="2" fill="#35cdff"/><rect x="1" y="9.2" width="2.1" height="2" fill="#fff"/><rect x="4" y="9.2" width="2.1" height="2" fill="#fff"/><rect x="7" y="9.2" width="2.1" height="2" fill="#fff"/><rect x="10" y="9.2" width="2.1" height="2" fill="#fff"/></svg>
<svg style="left:81px;top:693px" width="16" height="16" viewBox="0 0 16 16"><rect x="0.6" y="1.6" width="9.8" height="9.8" rx="1.2" fill="#fff" stroke="#000" stroke-width="1.1"/><path d="M3 1.6Q3 3.2 4 3.2H7Q8 3.2 8 1.6" fill="#fff" stroke="#000" stroke-width="1.1"/><rect x="4.1" y="0.3" width="2.8" height="1.6" rx=".6" fill="#fff" stroke="#000" stroke-width=".9"/><path d="M2.4 7.4L4.4 9.6L6.2 7.2" fill="none" stroke="#8b0000" stroke-width="1.3"/><path d="M6.2 7.2L8.6 4.2" fill="none" stroke="#8b0000" stroke-width="1.1" stroke-dasharray="1 .7"/><rect x="6.5" y="7.5" width="9.5" height="8.5" fill="#000"/><rect x="6.5" y="7.5" width="8" height="7" fill="#b4b4b4"/><rect x="6.5" y="7.5" width="8" height="2.2" fill="#9a9a9a"/><rect x="7.3" y="8.1" width="4.6" height="1.2" fill="#000088"/><rect x="7.3" y="10.2" width="1.1" height="1.1" fill="#fff"/><rect x="7.3" y="12.1" width="1.1" height="1.1" fill="#fff"/><rect x="7.3" y="14.0" width="1.1" height="1.1" fill="#fff"/><rect x="9.2" y="10.2" width="1.1" height="1.1" fill="#fff"/><rect x="9.2" y="12.1" width="1.1" height="1.1" fill="#fff"/><rect x="9.2" y="14.0" width="1.1" height="1.1" fill="#fff"/><rect x="11.1" y="10.2" width="1.1" height="1.1" fill="#fff"/><rect x="11.1" y="12.1" width="1.1" height="1.1" fill="#fff"/><rect x="11.1" y="14.0" width="1.1" height="1.1" fill="#fff"/><rect x="13.0" y="10.2" width="1.1" height="1.1" fill="#fff"/><rect x="13.0" y="12.1" width="1.1" height="1.1" fill="#fff"/><rect x="13.0" y="14.0" width="1.1" height="1.1" fill="#fff"/></svg>
<span class="t" style="left:102.50px;top:691px;font-size:13.3px;color:#000;line-height:24px;letter-spacing:-0.087px;">MW 2.3.6</span>
<svg style="left:178px;top:697px" width="17" height="11" viewBox="0 0 17 11"><path d="M0.8 0H13.2Q14 0 14 .8V3.6H9.2L8 5.2V6.2Q8 7 7.2 7H0.8Q0 7 0 6.2V.8Q0 0 .8 0Z" fill="#4a7eb6"/><path d="M9 7.1H12.2L10.9 5.2H13L16.2 8.1L13 11H10.9L12.2 9.1H9Z" fill="#737373"/></svg>
<span class="t" style="left:210.00px;top:691px;font-size:13.3px;color:#000;line-height:24px;letter-spacing:-0.750px;">0%</span>
<span class="t" style="left:317.00px;top:691px;font-size:13.3px;color:#000;line-height:24px;letter-spacing:0.376px;">Sprint Review / Demonstration Meeting 6</span>
<span class="t" style="left:708.30px;top:691px;font-size:13.3px;color:#000;line-height:24px;letter-spacing:-0.140px;">1 hr</span>
<span class="t" style="left:795.00px;top:691px;font-size:13.3px;color:#000;line-height:24px;letter-spacing:0.139px;">Fri 31/01/20</span>
<span class="t" style="left:906.30px;top:691px;font-size:13.3px;color:#000;line-height:24px;letter-spacing:0.139px;">Fri 31/01/20</span>
<span class="t" style="left:1074.30px;top:691px;font-size:13.3px;color:#000;line-height:24px;letter-spacing:-0.477px;">NA</span>
<span class="t" style="left:1143.30px;top:691px;font-size:13.3px;color:#000;line-height:24px;letter-spacing:-0.477px;">NA</span>
<svg style="left:64px;top:734px" width="14" height="12" viewBox="0 0 14 12"><rect x="0" y="0" width="14" height="12" fill="#4f6f9a"/><rect x="0" y="0" width="14" height="3" fill="#5c8fe6"/><rect x="1" y="1" width="12" height=".9" fill="#8ab0f4"/><rect x="9.2" y="5.4" width="3.8" height="3.6" fill="#0a78a6"/><rect x="1" y="3.2" width="2.1" height="2" fill="#fff"/><rect x="4" y="3.2" width="2.1" height="2" fill="#fff"/><rect x="7" y="3.2" width="2.1" height="2" fill="#fff"/><rect x="10" y="3.2" width="2.1" height="2" fill="#fff"/><rect x="1" y="6.2" width="2.1" height="2" fill="#fff"/><rect x="4" y="6.2" width="2.1" height="2" fill="#b4cce4"/><rect x="7" y="6.2" width="2.1" height="2" fill="#fff"/><rect x="10" y="6.2" width="2.1" height="2" fill="#35cdff"/><rect x="1" y="9.2" width="2.1" height="2" fill="#fff"/><rect x="4" y="9.2" width="2.1" height="2" fill="#fff"/><rect x="7" y="9.2" width="2.1" height="2" fill="#fff"/><rect x="10" y="9.2" width="2.1" height="2" fill="#fff"/></svg>
<svg style="left:81px;top:733px" width="16" height="16" viewBox="0 0 16 16"><rect x="0.6" y="1.6" width="9.8" height="9.8" rx="1.2" fill="#fff" stroke="#000" stroke-width="1.1"/><path d="M3 1.6Q3 3.2 4 3.2H7Q8 3.2 8 1.6" fill="#fff" stroke="#000" stroke-width="1.1"/><rect x="4.1" y="0.3" width="2.8" height="1.6" rx=".6" fill="#fff" stroke="#000" stroke-width=".9"/><path d="M2.4 7.4L4.4 9.6L6.2 7.2" fill="none" stroke="#8b0000" stroke-width="1.3"/><path d="M6.2 7.2L8.6 4.2" fill="none" stroke="#8b0000" stroke-width="1.1" stroke-dasharray="1 .7"/><rect x="6.5" y="7.5" width="9.5" height="8.5" fill="#000"/><rect x="6.5" y="7.5" width="8" height="7" fill="#b4b4b4"/><rect x="6.5" y="7.5" width="8" height="2.2" fill="#9a9a9a"/><rect x="7.3" y="8.1" width="4.6" height="1.2" fill="#000088"/><rect x="7.3" y="10.2" width="1.1" height="1.1" fill="#fff"/><rect x="7.3" y="12.1" width="1.1" height="1.1" fill="#fff"/><rect x="7.3" y="14.0" width="1.1" height="1.1" fill="#fff"/><rect x="9.2" y="10.2" width="1.1" height="1.1" fill="#fff"/><rect x="9.2" y="12.1" width="1.1" height="1.1" fill="#fff"/><rect x="9.2" y="14.0" width="1.1" height="1.1" fill="#fff"/><rect x="11.1" y="10.2" width="1.1" height="1.1" fill="#fff"/><rect x="11.1" y="12.1" width="1.1" height="1.1" fill="#fff"/><rect x="11.1" y="14.0" width="1.1" height="1.1" fill="#fff"/><rect x="13.0" y="10.2" width="1.1" height="1.1" fill="#fff"/><rect x="13.0" y="12.1" width="1.1" height="1.1" fill="#fff"/><rect x="13.0" y="14.0" width="1.1" height="1.1" fill="#fff"/></svg>
<span class="t" style="left:102.50px;top:731px;font-size:13.3px;color:#000;line-height:24px;letter-spacing:-0.087px;">MW 2.3.7</span>
<svg style="left:178px;top:737px" width="17" height="11" viewBox="0 0 17 11"><path d="M0.8 0H13.2Q14 0 14 .8V3.6H9.2L8 5.2V6.2Q8 7 7.2 7H0.8Q0 7 0 6.2V.8Q0 0 .8 0Z" fill="#4a7eb6"/><path d="M9 7.1H12.2L10.9 5.2H13L16.2 8.1L13 11H10.9L12.2 9.1H9Z" fill="#737373"/></svg>
<span class="t" style="left:210.00px;top:731px;font-size:13.3px;color:#000;line-height:24px;letter-spacing:-0.750px;">0%</span>
<span class="t" style="left:317.00px;top:731px;font-size:13.3px;color:#000;line-height:24px;letter-spacing:0.376px;">Sprint Review / Demonstration Meeting 7</span>
<span class="t" style="left:708.30px;top:731px;font-size:13.3px;color:#000;line-height:24px;letter-spacing:-0.140px;">1 hr</span>
<span class="t" style="left:795.00px;top:731px;font-size:13.3px;color:#000;line-height:24px;letter-spacing:0.139px;">Fri 14/02/20</span>
<span class="t" style="left:906.30px;top:731px;font-size:13.3px;color:#000;line-height:24px;letter-spacing:0.139px;">Fri 14/02/20</span>
<span class="t" style="left:1074.30px;top:731px;font-size:13.3px;color:#000;line-height:24px;letter-spacing:-0.477px;">NA</span>
<span class="t" style="left:1143.30px;top:731px;font-size:13.3px;color:#000;line-height:24px;letter-spacing:-0.477px;">NA</span>
<svg style="left:64px;top:774px" width="14" height="12" viewBox="0 0 14 12"><rect x="0" y="0" width="14" height="12" fill="#4f6f9a"/><rect x="0" y="0" width="14" height="3" fill="#5c8fe6"/><rect x="1" y="1" width="12" height=".9" fill="#8ab0f4"/><rect x="9.2" y="5.4" width="3.8" height="3.6" fill="#0a78a6"/><rect x="1" y="3.2" width="2.1" height="2" fill="#fff"/><rect x="4" y="3.2" width="2.1" height="2" fill="#fff"/><rect x="7" y="3.2" width="2.1" height="2" fill="#fff"/><rect x="10" y="3.2" width="2.1" height="2" fill="#fff"/><rect x="1" y="6.2" width="2.1" height="2" fill="#fff"/><rect x="4" y="6.2" width="2.1" height="2" fill="#b4cce4"/><rect x="7" y="6.2" width="2.1" height="2" fill="#fff"/><rect x="10" y="6.2" width="2.1" height="2" fill="#35cdff"/><rect x="1" y="9.2" width="2.1" height="2" fill="#fff"/><rect x="4" y="9.2" width="2.1" height="2" fill="#fff"/><rect x="7" y="9.2" width="2.1" height="2" fill="#fff"/><rect x="10" y="9.2" width="2.1" height="2" fill="#fff"/></svg>
<svg style="left:81px;top:773px" width="16" height="16" viewBox="0 0 16 16"><rect x="0.6" y="1.6" width="9.8" height="9.8" rx="1.2" fill="#fff" stroke="#000" stroke-width="1.1"/><path d="M3 1.6Q3 3.2 4 3.2H7Q8 3.2 8 1.6" fill="#fff" stroke="#000" stroke-width="1.1"/><rect x="4.1" y="0.3" width="2.8" height="1.6" rx=".6" fill="#fff" stroke="#000" stroke-width=".9"/><path d="M2.4 7.4L4.4 9.6L6.2 7.2" fill="none" stroke="#8b0000" stroke-width="1.3"/><path d="M6.2 7.2L8.6 4.2" fill="none" stroke="#8b0000" stroke-width="1.1" stroke-dasharray="1 .7"/><rect x="6.5" y="7.5" width="9.5" height="8.5" fill="#000"/><rect x="6.5" y="7.5" width="8" height="7" fill="#b4b4b4"/><rect x="6.5" y="7.5" width="8" height="2.2" fill="#9a9a9a"/><rect x="7.3" y="8.1" width="4.6" height="1.2" fill="#000088"/><rect x="7.3" y="10.2" width="1.1" height="1.1" fill="#fff"/><rect x="7.3" y="12.1" width="1.1" height="1.1" fill="#fff"/><rect x="7.3" y="14.0" width="1.1" height="1.1" fill="#fff"/><rect x="9.2" y="10.2" width="1.1" height="1.1" fill="#fff"/><rect x="9.2" y="12.1" width="1.1" height="1.1" fill="#fff"/><rect x="9.2" y="14.0" width="1.1" height="1.1" fill="#fff"/><rect x="11.1" y="10.2" width="1.1" height="1.1" fill="#fff"/><rect x="11.1" y="12.1" width="1.1" height="1.1" fill="#fff"/><rect x="11.1" y="14.0" width="1.1" height="1.1" fill="#fff"/><rect x="13.0" y="10.2" width="1.1" height="1.1" fill="#fff"/><rect x="13.0" y="12.1" width="1.1" height="1.1" fill="#fff"/><rect x="13.0" y="14.0" width="1.1" height="1.1" fill="#fff"/></svg>
<span class="t" style="left:102.50px;top:771px;font-size:13.3px;color:#000;line-height:24px;letter-spacing:-0.087px;">MW 2.3.8</span>
<svg style="left:178px;top:777px" width="17" height="11" viewBox="0 0 17 11"><path d="M0.8 0H13.2Q14 0 14 .8V3.6H9.2L8 5.2V6.2Q8 7 7.2 7H0.8Q0 7 0 6.2V.8Q0 0 .8 0Z" fill="#4a7eb6"/><path d="M9 7.1H12.2L10.9 5.2H13L16.2 8.1L13 11H10.9L12.2 9.1H9Z" fill="#737373"/></svg>
<span class="t" style="left:210.00px;top:771px;font-size:13.3px;color:#000;line-height:24px;letter-spacing:-0.750px;">0%</span>
<span class="t" style="left:317.00px;top:771px;font-size:13.3px;color:#000;line-height:24px;letter-spacing:0.376px;">Sprint Review / Demonstration Meeting 8</span>
<span class="t" style="left:708.30px;top:771px;font-size:13.3px;color:#000;line-height:24px;letter-spacing:-0.140px;">1 hr</span>
<span class="t" style="left:795.00px;top:771px;font-size:13.3px;color:#000;line-height:24px;letter-spacing:0.139px;">Fri 28/02/20</span>
<span class="t" style="left:906.30px;top:771px;font-size:13.3px;color:#000;line-height:24px;letter-spacing:0.139px;">Fri 28/02/20</span>
<span class="t" style="left:1074.30px;top:771px;font-size:13.3px;color:#000;line-height:24px;letter-spacing:-0.477px;">NA</span>
<span class="t" style="left:1143.30px;top:771px;font-size:13.3px;color:#000;line-height:24px;letter-spacing:-0.477px;">NA</span>
<svg style="left:64px;top:814px" width="14" height="12" viewBox="0 0 14 12"><rect x="0" y="0" width="14" height="12" fill="#4f6f9a"/><rect x="0" y="0" width="14" height="3" fill="#5c8fe6"/><rect x="1" y="1" width="12" height=".9" fill="#8ab0f4"/><rect x="9.2" y="5.4" width="3.8" height="3.6" fill="#0a78a6"/><rect x="1" y="3.2" width="2.1" height="2" fill="#fff"/><rect x="4" y="3.2" width="2.1" height="2" fill="#fff"/><rect x="7" y="3.2" width="2.1" height="2" fill="#fff"/><rect x="10" y="3.2" width="2.1" height="2" fill="#fff"/><rect x="1" y="6.2" width="2.1" height="2" fill="#fff"/><rect x="4" y="6.2" width="2.1" height="2" fill="#b4cce4"/><rect x="7" y="6.2" width="2.1" height="2" fill="#fff"/><rect x="10" y="6.2" width="2.1" height="2" fill="#35cdff"/><rect x="1" y="9.2" width="2.1" height="2" fill="#fff"/><rect x="4" y="9.2" width="2.1" height="2" fill="#fff"/><rect x="7" y="9.2" width="2.1" height="2" fill="#fff"/><rect x="10" y="9.2" width="2.1" height="2" fill="#fff"/></svg>
<svg style="left:81px;top:813px" width="16" height="16" viewBox="0 0 16 16"><rect x="0.6" y="1.6" width="9.8" height="9.8" rx="1.2" fill="#fff" stroke="#000" stroke-width="1.1"/><path d="M3 1.6Q3 3.2 4 3.2H7Q8 3.2 8 1.6" fill="#fff" stroke="#000" stroke-width="1.1"/><rect x="4.1" y="0.3" width="2.8" height="1.6" rx=".6" fill="#fff" stroke="#000" stroke-width=".9"/><path d="M2.4 7.4L4.4 9.6L6.2 7.2" fill="none" stroke="#8b0000" stroke-width="1.3"/><path d="M6.2 7.2L8.6 4.2" fill="none" stroke="#8b0000" stroke-width="1.1" stroke-dasharray="1 .7"/><rect x="6.5" y="7.5" width="9.5" height="8.5" fill="#000"/><rect x="6.5" y="7.5" width="8" height="7" fill="#b4b4b4"/><rect x="6.5" y="7.5" width="8" height="2.2" fill="#9a9a9a"/><rect x="7.3" y="8.1" width="4.6" height="1.2" fill="#000088"/><rect x="7.3" y="10.2" width="1.1" height="1.1" fill="#fff"/><rect x="7.3" y="12.1" width="1.1" height="1.1" fill="#fff"/><rect x="7.3" y="14.0" width="1.1" height="1.1" fill="#fff"/><rect x="9.2" y="10.2" width="1.1" height="1.1" fill="#fff"/><rect x="9.2" y="12.1" width="1.1" height="1.1" fill="#fff"/><rect x="9.2" y="14.0" width="1.1" height="1.1" fill="#fff"/><rect x="11.1" y="10.2" width="1.1" height="1.1" fill="#fff"/><rect x="11.1" y="12.1" width="1.1" height="1.1" fill="#fff"/><rect x="11.1" y="14.0" width="1.1" height="1.1" fill="#fff"/><rect x="13.0" y="10.2" width="1.1" height="1.1" fill="#fff"/><rect x="13.0" y="12.1" width="1.1" height="1.1" fill="#fff"/><rect x="13.0" y="14.0" width="1.1" height="1.1" fill="#fff"/></svg>
<span class="t" style="left:102.50px;top:811px;font-size:13.3px;color:#000;line-height:24px;letter-spacing:-0.087px;">MW 2.3.9</span>
<svg style="left:178px;top:817px" width="17" height="11" viewBox="0 0 17 11"><path d="M0.8 0H13.2Q14 0 14 .8V3.6H9.2L8 5.2V6.2Q8 7 7.2 7H0.8Q0 7 0 6.2V.8Q0 0 .8 0Z" fill="#4a7eb6"/><path d="M9 7.1H12.2L10.9 5.2H13L16.2 8.1L13 11H10.9L12.2 9.1H9Z" fill="#737373"/></svg>
<span class="t" style="left:210.00px;top:811px;font-size:13.3px;color:#000;line-height:24px;letter-spacing:-0.750px;">0%</span>
<span class="t" style="left:317.00px;top:811px;font-size:13.3px;color:#000;line-height:24px;letter-spacing:0.376px;">Sprint Review / Demonstration Meeting 9</span>
<span class="t" style="left:708.30px;top:811px;font-size:13.3px;color:#000;line-height:24px;letter-spacing:-0.140px;">1 hr</span>
<span class="t" style="left:795.00px;top:811px;font-size:13.3px;color:#000;line-height:24px;letter-spacing:0.139px;">Fri 13/03/20</span>
<span class="t" style="left:906.30px;top:811px;font-size:13.3px;color:#000;line-height:24px;letter-spacing:0.139px;">Fri 13/03/20</span>
<span class="t" style="left:1074.30px;top:811px;font-size:13.3px;color:#000;line-height:24px;letter-spacing:-0.477px;">NA</span>
<span class="t" style="left:1143.30px;top:811px;font-size:13.3px;color:#000;line-height:24px;letter-spacing:-0.477px;">NA</span>
<svg style="left:64px;top:854px" width="14" height="12" viewBox="0 0 14 12"><rect x="0" y="0" width="14" height="12" fill="#4f6f9a"/><rect x="0" y="0" width="14" height="3" fill="#5c8fe6"/><rect x="1" y="1" width="12" height=".9" fill="#8ab0f4"/><rect x="9.2" y="5.4" width="3.8" height="3.6" fill="#0a78a6"/><rect x="1" y="3.2" width="2.1" height="2" fill="#fff"/><rect x="4" y="3.2" width="2.1" height="2" fill="#fff"/><rect x="7" y="3.2" width="2.1" height="2" fill="#fff"/><rect x="10" y="3.2" width="2.1" height="2" fill="#fff"/><rect x="1" y="6.2" width="2.1" height="2" fill="#fff"/><rect x="4" y="6.2" width="2.1" height="2" fill="#b4cce4"/><rect x="7" y="6.2" width="2.1" height="2" fill="#fff"/><rect x="10" y="6.2" width="2.1" height="2" fill="#35cdff"/><rect x="1" y="9.2" width="2.1" height="2" fill="#fff"/><rect x="4" y="9.2" width="2.1" height="2" fill="#fff"/><rect x="7" y="9.2" width="2.1" height="2" fill="#fff"/><rect x="10" y="9.2" width="2.1" height="2" fill="#fff"/></svg>
<svg style="left:81px;top:853px" width="16" height="16" viewBox="0 0 16 16"><rect x="0.6" y="1.6" width="9.8" height="9.8" rx="1.2" fill="#fff" stroke="#000" stroke-width="1.1"/><path d="M3 1.6Q3 3.2 4 3.2H7Q8 3.2 8 1.6" fill="#fff" stroke="#000" stroke-width="1.1"/><rect x="4.1" y="0.3" width="2.8" height="1.6" rx=".6" fill="#fff" stroke="#000" stroke-width=".9"/><path d="M2.4 7.4L4.4 9.6L6.2 7.2" fill="none" stroke="#8b0000" stroke-width="1.3"/><path d="M6.2 7.2L8.6 4.2" fill="none" stroke="#8b0000" stroke-width="1.1" stroke-dasharray="1 .7"/><rect x="6.5" y="7.5" width="9.5" height="8.5" fill="#000"/><rect x="6.5" y="7.5" width="8" height="7" fill="#b4b4b4"/><rect x="6.5" y="7.5" width="8" height="2.2" fill="#9a9a9a"/><rect x="7.3" y="8.1" width="4.6" height="1.2" fill="#000088"/><rect x="7.3" y="10.2" width="1.1" height="1.1" fill="#fff"/><rect x="7.3" y="12.1" width="1.1" height="1.1" fill="#fff"/><rect x="7.3" y="14.0" width="1.1" height="1.1" fill="#fff"/><rect x="9.2" y="10.2" width="1.1" height="1.1" fill="#fff"/><rect x="9.2" y="12.1" width="1.1" height="1.1" fill="#fff"/><rect x="9.2" y="14.0" width="1.1" height="1.1" fill="#fff"/><rect x="11.1" y="10.2" width="1.1" height="1.1" fill="#fff"/><rect x="11.1" y="12.1" width="1.1" height="1.1" fill="#fff"/><rect x="11.1" y="14.0" width="1.1" height="1.1" fill="#fff"/><rect x="13.0" y="10.2" width="1.1" height="1.1" fill="#fff"/><rect x="13.0" y="12.1" width="1.1" height="1.1" fill="#fff"/><rect x="13.0" y="14.0" width="1.1" height="1.1" fill="#fff"/></svg>
<span class="t" style="left:102.50px;top:851px;font-size:13.3px;color:#000;line-height:24px;letter-spacing:-0.126px;">MW 2.3.10</span>
<svg style="left:178px;top:857px" width="17" height="11" viewBox="0 0 17 11"><path d="M0.8 0H13.2Q14 0 14 .8V3.6H9.2L8 5.2V6.2Q8 7 7.2 7H0.8Q0 7 0 6.2V.8Q0 0 .8 0Z" fill="#4a7eb6"/><path d="M9 7.1H12.2L10.9 5.2H13L16.2 8.1L13 11H10.9L12.2 9.1H9Z" fill="#737373"/></svg>
<span class="t" style="left:210.00px;top:851px;font-size:13.3px;color:#000;line-height:24px;letter-spacing:-0.750px;">0%</span>
<span class="t" style="left:317.00px;top:851px;font-size:13.3px;color:#000;line-height:24px;letter-spacing:0.356px;">Sprint Review / Demonstration Meeting 10</span>
<span class="t" style="left:708.30px;top:851px;font-size:13.3px;color:#000;line-height:24px;letter-spacing:-0.140px;">1 hr</span>
<span class="t" style="left:795.00px;top:851px;font-size:13.3px;color:#000;line-height:24px;letter-spacing:0.139px;">Fri 27/03/20</span>
<span class="t" style="left:906.30px;top:851px;font-size:13.3px;color:#000;line-height:24px;letter-spacing:0.139px;">Fri 27/03/20</span>
<span class="t" style="left:1074.30px;top:851px;font-size:13.3px;color:#000;line-height:24px;letter-spacing:-0.477px;">NA</span>
<span class="t" style="left:1143.30px;top:851px;font-size:13.3px;color:#000;line-height:24px;letter-spacing:-0.477px;">NA</span>
<svg style="left:64px;top:894px" width="14" height="12" viewBox="0 0 14 12"><rect x="0" y="0" width="14" height="12" fill="#4f6f9a"/><rect x="0" y="0" width="14" height="3" fill="#5c8fe6"/><rect x="1" y="1" width="12" height=".9" fill="#8ab0f4"/><rect x="9.2" y="5.4" width="3.8" height="3.6" fill="#0a78a6"/><rect x="1" y="3.2" width="2.1" height="2" fill="#fff"/><rect x="4" y="3.2" width="2.1" height="2" fill="#fff"/><rect x="7" y="3.2" width="2.1" height="2" fill="#fff"/><rect x="10" y="3.2" width="2.1" height="2" fill="#fff"/><rect x="1" y="6.2" width="2.1" height="2" fill="#fff"/><rect x="4" y="6.2" width="2.1" height="2" fill="#b4cce4"/><rect x="7" y="6.2" width="2.1" height="2" fill="#fff"/><rect x="10" y="6.2" width="2.1" height="2" fill="#35cdff"/><rect x="1" y="9.2" width="2.1" height="2" fill="#fff"/><rect x="4" y="9.2" width="2.1" height="2" fill="#fff"/><rect x="7" y="9.2" width="2.1" height="2" fill="#fff"/><rect x="10" y="9.2" width="2.1" height="2" fill="#fff"/></svg>
<svg style="left:81px;top:893px" width="16" height="16" viewBox="0 0 16 16"><rect x="0.6" y="1.6" width="9.8" height="9.8" rx="1.2" fill="#fff" stroke="#000" stroke-width="1.1"/><path d="M3 1.6Q3 3.2 4 3.2H7Q8 3.2 8 1.6" fill="#fff" stroke="#000" stroke-width="1.1"/><rect x="4.1" y="0.3" width="2.8" height="1.6" rx=".6" fill="#fff" stroke="#000" stroke-width=".9"/><path d="M2.4 7.4L4.4 9.6L6.2 7.2" fill="none" stroke="#8b0000" stroke-width="1.3"/><path d="M6.2 7.2L8.6 4.2" fill="none" stroke="#8b0000" stroke-width="1.1" stroke-dasharray="1 .7"/><rect x="6.5" y="7.5" width="9.5" height="8.5" fill="#000"/><rect x="6.5" y="7.5" width="8" height="7" fill="#b4b4b4"/><rect x="6.5" y="7.5" width="8" height="2.2" fill="#9a9a9a"/><rect x="7.3" y="8.1" width="4.6" height="1.2" fill="#000088"/><rect x="7.3" y="10.2" width="1.1" height="1.1" fill="#fff"/><rect x="7.3" y="12.1" width="1.1" height="1.1" fill="#fff"/><rect x="7.3" y="14.0" width="1.1" height="1.1" fill="#fff"/><rect x="9.2" y="10.2" width="1.1" height="1.1" fill="#fff"/><rect x="9.2" y="12.1" width="1.1" height="1.1" fill="#fff"/><rect x="9.2" y="14.0" width="1.1" height="1.1" fill="#fff"/><rect x="11.1" y="10.2" width="1.1" height="1.1" fill="#fff"/><rect x="11.1" y="12.1" width="1.1" height="1.1" fill="#fff"/><rect x="11.1" y="14.0" width="1.1" height="1.1" fill="#fff"/><rect x="13.0" y="10.2" width="1.1" height="1.1" fill="#fff"/><rect x="13.0" y="12.1" width="1.1" height="1.1" fill="#fff"/><rect x="13.0" y="14.0" width="1.1" height="1.1" fill="#fff"/></svg>
<span class="t" style="left:102.50px;top:891px;font-size:13.3px;color:#000;line-height:24px;">MW 2.3.11</span>
<svg style="left:178px;top:897px" width="17" height="11" viewBox="0 0 17 11"><path d="M0.8 0H13.2Q14 0 14 .8V3.6H9.2L8 5.2V6.2Q8 7 7.2 7H0.8Q0 7 0 6.2V.8Q0 0 .8 0Z" fill="#4a7eb6"/><path d="M9 7.1H12.2L10.9 5.2H13L16.2 8.1L13 11H10.9L12.2 9.1H9Z" fill="#737373"/></svg>
<span class="t" style="left:210.00px;top:891px;font-size:13.3px;color:#000;line-height:24px;letter-spacing:-0.750px;">0%</span>
<span class="t" style="left:317.00px;top:891px;font-size:13.3px;color:#000;line-height:24px;letter-spacing:0.381px;">Sprint Review / Demonstration Meeting 11</span>
<span class="t" style="left:708.30px;top:891px;font-size:13.3px;color:#000;line-height:24px;letter-spacing:-0.140px;">1 hr</span>
<span class="t" style="left:795.00px;top:891px;font-size:13.3px;color:#000;line-height:24px;letter-spacing:0.146px;">Tue 14/04/20</span>
<span class="t" style="left:906.30px;top:891px;font-size:13.3px;color:#000;line-height:24px;letter-spacing:0.146px;">Tue 14/04/20</span>
<span class="t" style="left:1074.30px;top:891px;font-size:13.3px;color:#000;line-height:24px;letter-spacing:-0.477px;">NA</span>
<span class="t" style="left:1143.30px;top:891px;font-size:13.3px;color:#000;line-height:24px;letter-spacing:-0.477px;">NA</span>
<svg style="left:64px;top:934px" width="14" height="12" viewBox="0 0 14 12"><rect x="0" y="0" width="14" height="12" fill="#4f6f9a"/><rect x="0" y="0" width="14" height="3" fill="#5c8fe6"/><rect x="1" y="1" width="12" height=".9" fill="#8ab0f4"/><rect x="9.2" y="5.4" width="3.8" height="3.6" fill="#0a78a6"/><rect x="1" y="3.2" width="2.1" height="2" fill="#fff"/><rect x="4" y="3.2" width="2.1" height="2" fill="#fff"/><rect x="7" y="3.2" width="2.1" height="2" fill="#fff"/><rect x="10" y="3.2" width="2.1" height="2" fill="#fff"/><rect x="1" y="6.2" width="2.1" height="2" fill="#fff"/><rect x="4" y="6.2" width="2.1" height="2" fill="#b4cce4"/><rect x="7" y="6.2" width="2.1" height="2" fill="#fff"/><rect x="10" y="6.2" width="2.1" height="2" fill="#35cdff"/><rect x="1" y="9.2" width="2.1" height="2" fill="#fff"/><rect x="4" y="9.2" width="2.1" height="2" fill="#fff"/><rect x="7" y="9.2" width="2.1" height="2" fill="#fff"/><rect x="10" y="9.2" width="2.1" height="2" fill="#fff"/></svg>
<svg style="left:81px;top:933px" width="16" height="16" viewBox="0 0 16 16"><rect x="0.6" y="1.6" width="9.8" height="9.8" rx="1.2" fill="#fff" stroke="#000" stroke-width="1.1"/><path d="M3 1.6Q3 3.2 4 3.2H7Q8 3.2 8 1.6" fill="#fff" stroke="#000" stroke-width="1.1"/><rect x="4.1" y="0.3" width="2.8" height="1.6" rx=".6" fill="#fff" stroke="#000" stroke-width=".9"/><path d="M2.4 7.4L4.4 9.6L6.2 7.2" fill="none" stroke="#8b0000" stroke-width="1.3"/><path d="M6.2 7.2L8.6 4.2" fill="none" stroke="#8b0000" stroke-width="1.1" stroke-dasharray="1 .7"/><rect x="6.5" y="7.5" width="9.5" height="8.5" fill="#000"/><rect x="6.5" y="7.5" width="8" height="7" fill="#b4b4b4"/><rect x="6.5" y="7.5" width="8" height="2.2" fill="#9a9a9a"/><rect x="7.3" y="8.1" width="4.6" height="1.2" fill="#000088"/><rect x="7.3" y="10.2" width="1.1" height="1.1" fill="#fff"/><rect x="7.3" y="12.1" width="1.1" height="1.1" fill="#fff"/><rect x="7.3" y="14.0" width="1.1" height="1.1" fill="#fff"/><rect x="9.2" y="10.2" width="1.1" height="1.1" fill="#fff"/><rect x="9.2" y="12.1" width="1.1" height="1.1" fill="#fff"/><rect x="9.2" y="14.0" width="1.1" height="1.1" fill="#fff"/><rect x="11.1" y="10.2" width="1.1" height="1.1" fill="#fff"/><rect x="11.1" y="12.1" width="1.1" height="1.1" fill="#fff"/><rect x="11.1" y="14.0" width="1.1" height="1.1" fill="#fff"/><rect x="13.0" y="10.2" width="1.1" height="1.1" fill="#fff"/><rect x="13.0" y="12.1" width="1.1" height="1.1" fill="#fff"/><rect x="13.0" y="14.0" width="1.1" height="1.1" fill="#fff"/></svg>
<span class="t" style="left:102.50px;top:931px;font-size:13.3px;color:#000;line-height:24px;letter-spacing:-0.126px;">MW 2.3.12</span>
<svg style="left:178px;top:937px" width="17" height="11" viewBox="0 0 17 11"><path d="M0.8 0H13.2Q14 0 14 .8V3.6H9.2L8 5.2V6.2Q8 7 7.2 7H0.8Q0 7 0 6.2V.8Q0 0 .8 0Z" fill="#4a7eb6"/><path d="M9 7.1H12.2L10.9 5.2H13L16.2 8.1L13 11H10.9L12.2 9.1H9Z" fill="#737373"/></svg>
<span class="t" style="left:210.00px;top:931px;font-size:13.3px;color:#000;line-height:24px;letter-spacing:-0.750px;">0%</span>
<span class="t" style="left:317.00px;top:931px;font-size:13.3px;color:#5a9534;line-height:24px;font-weight:bold;letter-spacing:-0.040px;">Sprint Review / Demonstration Meeting 12 etc...</span>
<span class="t" style="left:708.30px;top:931px;font-size:13.3px;color:#000;line-height:24px;letter-spacing:-0.140px;">1 hr</span>
<span class="t" style="left:795.00px;top:931px;font-size:13.3px;color:#000;line-height:24px;letter-spacing:0.139px;">Fri 24/04/20</span>
<span class="t" style="left:906.30px;top:931px;font-size:13.3px;color:#000;line-height:24px;letter-spacing:0.139px;">Fri 24/04/20</span>
<span class="t" style="left:1074.30px;top:931px;font-size:13.3px;color:#000;line-height:24px;letter-spacing:-0.477px;">NA</span>
<span class="t" style="left:1143.30px;top:931px;font-size:13.3px;color:#000;line-height:24px;letter-spacing:-0.477px;">NA</span>
<div style="left:25px;top:1040px;width:1534px;height:17px;background:#fff;"></div>
<div style="left:0px;top:1040px;width:25px;height:17px;background:#e6e6e6;"></div>
<div style="left:42px;top:1041px;width:1495px;height:15px;background:#f0f0f0;"></div>
<div style="left:27px;top:1041px;width:15px;height:15px;background:#fff;border:1px solid #ababab;box-sizing:border-box;"></div>
<svg style="left:32px;top:1044px" width="5" height="8" viewBox="0 0 5 8"><path d="M5 0V8L0 4Z" fill="#777"/></svg>
<div style="left:42px;top:1041px;width:1297px;height:15px;background:#fff;border:1px solid #ababab;box-sizing:border-box;"></div>
<div style="left:1539px;top:1041px;width:15px;height:15px;background:#fff;border:1px solid #ababab;box-sizing:border-box;"></div>
<svg style="left:1544.5px;top:1044px" width="5" height="8" viewBox="0 0 5 8"><path d="M0 0V8L5 4Z" fill="#777"/></svg>
<div style="left:1554px;top:64px;width:5px;height:993px;background:#e6e6e6;"></div>
<div style="left:1554px;top:64px;width:1px;height:993px;background:#ababab;"></div>
<div style="left:1558px;top:64px;width:1px;height:993px;background:#ababab;"></div>
<div style="left:1559px;top:64px;width:344px;height:55px;background:#e6e6e6;"></div>
<div style="left:1559px;top:119px;width:344px;height:1px;background:#ababab;"></div>
<div style="left:1559px;top:120px;width:74px;height:920px;background:#f7f7f7;"></div>
<div style="left:1817px;top:120px;width:37px;height:920px;background:#f7f7f7;"></div>
<div style="left:1559px;top:469px;width:344px;height:1px;background:#808080;"></div>
<div style="left:1559px;top:491px;width:344px;height:1px;background:#808080;"></div>
<div style="left:1659px;top:83px;width:1px;height:14px;background:#cfcfcf;"></div>
<div style="left:1765px;top:83px;width:1px;height:14px;background:#cfcfcf;"></div>
<div style="left:1872px;top:83px;width:1px;height:14px;background:#cfcfcf;"></div>
<div style="left:1595px;top:106px;width:1px;height:13px;background:#cfcfcf;"></div>
<div style="left:1632px;top:106px;width:1px;height:13px;background:#cfcfcf;"></div>
<div style="left:1669px;top:106px;width:1px;height:13px;background:#cfcfcf;"></div>
<div style="left:1706px;top:106px;width:1px;height:13px;background:#cfcfcf;"></div>
<div style="left:1743px;top:106px;width:1px;height:13px;background:#cfcfcf;"></div>
<div style="left:1780px;top:106px;width:1px;height:13px;background:#cfcfcf;"></div>
<div style="left:1817px;top:106px;width:1px;height:13px;background:#cfcfcf;"></div>
<div style="left:1854px;top:106px;width:1px;height:13px;background:#cfcfcf;"></div>
<div style="left:1891px;top:106px;width:1px;height:13px;background:#cfcfcf;"></div>
<div style="left:1559px;top:64px;width:344px;height:55px;overflow:hidden;">
<span class="t" style="left:-1.70px;top:16px;font-size:11.5px;color:#686868;line-height:24px;letter-spacing:-0.279px;">Sat 28/09</span>
<span class="t" style="left:106.00px;top:16px;font-size:11.5px;color:#686868;line-height:24px;letter-spacing:-0.233px;">Tue 01/10</span>
<span class="t" style="left:212.30px;top:16px;font-size:11.5px;color:#686868;line-height:24px;letter-spacing:-0.173px;">Fri 04/10</span>
<span class="t" style="left:319.50px;top:16px;font-size:11.5px;color:#686868;line-height:24px;letter-spacing:0.207px;">Mon 07/10</span>
<span class="t" style="left:15.10px;top:32px;font-size:11.5px;color:#686868;line-height:24px;">4</span>
<span class="t" style="left:52.10px;top:32px;font-size:11.5px;color:#686868;line-height:24px;">5</span>
<span class="t" style="left:89.10px;top:32px;font-size:11.5px;color:#686868;line-height:24px;">6</span>
<span class="t" style="left:126.10px;top:32px;font-size:11.5px;color:#686868;line-height:24px;">7</span>
<span class="t" style="left:163.10px;top:32px;font-size:11.5px;color:#686868;line-height:24px;">8</span>
<span class="t" style="left:200.10px;top:32px;font-size:11.5px;color:#686868;line-height:24px;">9</span>
<span class="t" style="left:233.90px;top:32px;font-size:11.5px;color:#686868;line-height:24px;">10</span>
<span class="t" style="left:271.33px;top:32px;font-size:11.5px;color:#686868;line-height:24px;">11</span>
<span class="t" style="left:307.90px;top:32px;font-size:11.5px;color:#686868;line-height:24px;">12</span>
<span class="t" style="left:344.90px;top:32px;font-size:11.5px;color:#686868;line-height:24px;">13</span>
</div>
<div style="left:1659px;top:123px;width:1px;height:917px;background:repeating-linear-gradient(#858585 0 1px,transparent 1px 4px);"></div>
<div style="left:1660px;top:125px;width:243px;height:2px;background:#b2b2b2;"></div>
<svg style="left:1658px;top:125px" width="3" height="11" viewBox="0 0 3 11"><path d="M.5 0V10.5H2.5V0" fill="none" stroke="#a8a8a8" stroke-width="1"/></svg>
<div style="left:1660px;top:221px;width:243px;height:2px;background:#404040;"></div>
<svg style="left:1658px;top:221px" width="3" height="11" viewBox="0 0 3 11"><path d="M.5 0V10.5H2.5V0" fill="none" stroke="#484848" stroke-width="1"/></svg>
<div style="left:1660px;top:295px;width:243px;height:2px;background:#404040;"></div>
<svg style="left:1658px;top:295px" width="3" height="11" viewBox="0 0 3 11"><path d="M.5 0V10.5H2.5V0" fill="none" stroke="#484848" stroke-width="1"/></svg>
<div style="left:1903px;top:64px;width:17px;height:976px;background:#fff;"></div>
<div style="left:1904px;top:64px;width:15px;height:970px;background:#f3f3f3;"></div>
<div style="left:1904px;top:66px;width:15px;height:15px;background:#fff;border:1px solid #ababab;box-sizing:border-box;"></div>
<svg style="left:1908px;top:71px" width="7" height="4" viewBox="0 0 7 4"><path d="M0 4H7L3.5 0Z" fill="#666"/></svg>
<div style="left:1904px;top:81px;width:15px;height:96px;background:#fff;border:1px solid #ababab;box-sizing:border-box;"></div>
<div style="left:1904px;top:1017px;width:15px;height:15px;background:#fff;border:1px solid #ababab;box-sizing:border-box;"></div>
<svg style="left:1908px;top:1023px" width="7" height="4" viewBox="0 0 7 4"><path d="M0 0H7L3.5 4Z" fill="#666"/></svg>
<div style="left:1903px;top:1034px;width:17px;height:6px;background:#666;"></div>
<div style="left:1903px;top:1034px;width:15px;height:4px;background:#e8e8e8;border:1px solid #fff;box-sizing:border-box;"></div>
<div style="left:1559px;top:1040px;width:361px;height:17px;background:#fff;"></div>
<div style="left:1576px;top:1041px;width:311px;height:15px;background:#f3f3f3;"></div>
<div style="left:1561px;top:1041px;width:15px;height:15px;background:#fff;border:1px solid #ababab;box-sizing:border-box;"></div>
<svg style="left:1566px;top:1044px" width="5" height="8" viewBox="0 0 5 8"><path d="M5 0V8L0 4Z" fill="#777"/></svg>
<div style="left:1576px;top:1041px;width:17px;height:15px;background:#fff;border:1px solid #ababab;box-sizing:border-box;"></div>
<div style="left:1889px;top:1041px;width:15px;height:15px;background:#fff;border:1px solid #ababab;box-sizing:border-box;"></div>
<svg style="left:1894.5px;top:1044px" width="5" height="8" viewBox="0 0 5 8"><path d="M0 0V8L5 4Z" fill="#777"/></svg>
</div></body></html>
